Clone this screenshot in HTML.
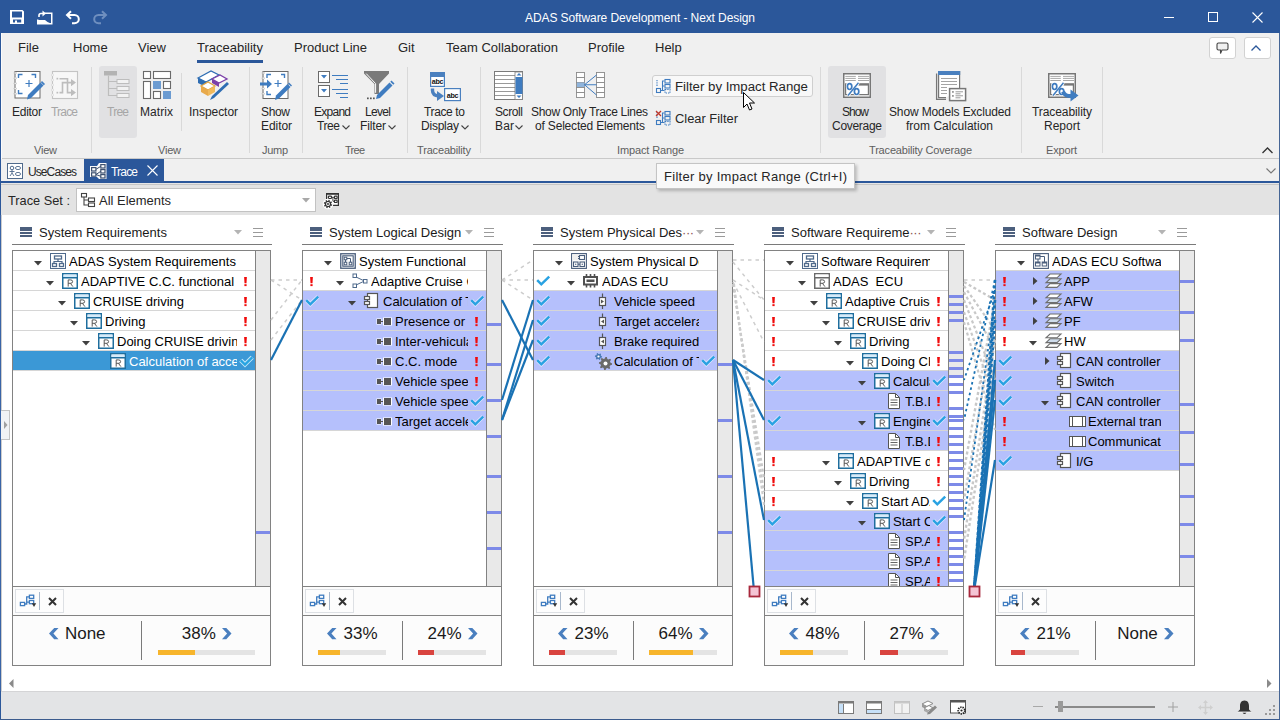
<!DOCTYPE html><html><head><meta charset="utf-8"><style>
*{box-sizing:border-box;margin:0;padding:0}
html,body{width:1280px;height:720px;overflow:hidden;background:#fff;font-family:"Liberation Sans",sans-serif;color:#262626}
.a{position:absolute}
.t{position:absolute;white-space:nowrap;line-height:1}
svg{position:absolute;overflow:visible}
</style></head><body><div class="a" style="left:0px;top:0px;width:1280px;height:720px;background:#fff"></div>
<div class="a" style="left:0px;top:0px;width:1280px;height:33px;background:#2b579a"></div>
<div class="a" style="left:0px;top:33px;width:1280px;height:126px;background:#f0f0f0"></div>
<div class="a" style="left:0px;top:159px;width:1280px;height:22px;background:#f0f0f0"></div>
<div class="a" style="left:0px;top:158px;width:1280px;height:1px;background:#c9c9c9"></div>
<div class="a" style="left:0px;top:181px;width:1280px;height:2px;background:#2b579a"></div>
<div class="a" style="left:0px;top:183px;width:1280px;height:1px;background:#e6e6e6"></div>
<div class="a" style="left:0px;top:184px;width:1280px;height:1px;background:#c6c6c6"></div>
<div class="a" style="left:0px;top:185px;width:1280px;height:30px;background:#e3e3e3"></div>
<div class="a" style="left:0px;top:691px;width:1280px;height:1px;background:#d4d4d6"></div>
<div class="a" style="left:0px;top:692px;width:1280px;height:28px;background:#e3e4e6"></div>
<div class="a" style="left:0px;top:0px;width:1px;height:720px;background:#2b579a"></div>
<div class="a" style="left:0px;top:215px;width:1px;height:476px;background:#3a64a6"></div>
<div class="a" style="left:1px;top:33px;width:1px;height:126px;background:#fbfbfb"></div>
<div class="a" style="left:1px;top:215px;width:1px;height:476px;background:#cdcdcd"></div>
<div class="a" style="left:1279px;top:33px;width:1px;height:687px;background:#456595"></div>
<div class="a" style="left:0px;top:719px;width:1280px;height:1px;background:#3b5b8e"></div>
<div class="t" style="left:525px;top:11.84px;font-size:12px;color:#ffffff;letter-spacing:-0.090px;">ADAS Software Development - Next Design</div>
<svg style="left:10px;top:10px" width="14" height="14" viewBox="0 0 14 14"><path d="M0 0H12.5L14 1.5V14H0Z M2 1.6V7.6H12V1.6Z M3 9.6V12.6H5V10.6H7V12.6H11.2V9.6Z" fill="#ffffff" fill-rule="evenodd"/></svg>
<svg style="left:37px;top:10px" width="16" height="15" viewBox="0 0 16 15"><path d="M0.75 9.5V13.75H14.75V3.25H7.5" fill="none" stroke="#ffffff" stroke-width="1.5"/><path d="M1 10H8L10.5 12L14 13.5H1Z" fill="#ffffff"/><path d="M2 7V5.5Q2 3.5 4 3.5H6" fill="none" stroke="#ffffff" stroke-width="1.6"/><path d="M5.5 0.5L9 3.5L5.5 6.5Z" fill="#ffffff"/></svg>
<svg style="left:65px;top:10px" width="15" height="14" viewBox="0 0 15 14"><path d="M2.5 5H9.5C12 5 13.8 7 13.8 9.2C13.8 11.4 12 13.2 9.5 13.2H7" fill="none" stroke="#ffffff" stroke-width="2"/><path d="M6 1.2L2 5L6 8.8" fill="none" stroke="#ffffff" stroke-width="2"/></svg>
<svg style="left:93px;top:10px" width="15" height="14" viewBox="0 0 15 14"><path d="M12.5 5H5.5C3 5 1.2 7 1.2 9.2C1.2 11.4 3 13.2 5.5 13.2H8" fill="none" stroke="#6f8fbf" stroke-width="2"/><path d="M9 1.2L13 5L9 8.8" fill="none" stroke="#6f8fbf" stroke-width="2"/></svg>
<div class="a" style="left:1164px;top:17px;width:10px;height:1px;background:#fff"></div>
<div class="a" style="left:1208px;top:12px;width:10px;height:10px;border:1px solid #fff"></div>
<svg style="left:1252px;top:12px" width="11" height="11" viewBox="0 0 11 11"><path d="M0.5 0.5L10.5 10.5M10.5 0.5L0.5 10.5" stroke="#fff" stroke-width="1.1"/></svg>
<div class="t" style="left:18px;top:41.00px;font-size:13px;color:#262626;">File</div>
<div class="t" style="left:73px;top:41.00px;font-size:13px;color:#262626;">Home</div>
<div class="t" style="left:138px;top:41.00px;font-size:13px;color:#262626;">View</div>
<div class="t" style="left:197px;top:41.00px;font-size:13px;color:#262626;">Traceability</div>
<div class="t" style="left:294px;top:41.00px;font-size:13px;color:#262626;">Product Line</div>
<div class="t" style="left:398px;top:41.00px;font-size:13px;color:#262626;">Git</div>
<div class="t" style="left:446px;top:41.00px;font-size:13px;color:#262626;">Team Collaboration</div>
<div class="t" style="left:588px;top:41.00px;font-size:13px;color:#262626;">Profile</div>
<div class="t" style="left:655px;top:41.00px;font-size:13px;color:#262626;">Help</div>
<div class="a" style="left:197px;top:60px;width:66px;height:2.5px;background:#2b579a"></div>
<div class="a" style="left:1209px;top:37px;width:27px;height:22px;border:1px solid #d2d2d2;border-radius:3px;background:#fff"></div>
<svg style="left:1216px;top:42px" width="13" height="13" viewBox="0 0 13 13"><path d="M2.5 1H10.5Q12 1 12 2.5V6.5Q12 8 10.5 8H6L4.5 11.5V8H2.5Q1 8 1 6.5V2.5Q1 1 2.5 1Z" fill="#f0f0f0" stroke="#444" stroke-width="1.1"/></svg>
<div class="a" style="left:1244px;top:37px;width:27px;height:22px;border:1px solid #d2d2d2;border-radius:3px;background:#fff"></div>
<svg style="left:1251px;top:45px" width="11" height="6" viewBox="0 0 11 6"><path d="M0.5 5.5L5 1L9.5 5.5" fill="none" stroke="#2b579a" stroke-width="1.3"/></svg>
<div class="t" style="left:34px;top:144.69px;font-size:11px;color:#5e5e5e;letter-spacing:-0.214px;">View</div>
<div class="t" style="left:158px;top:144.69px;font-size:11px;color:#5e5e5e;letter-spacing:-0.214px;">View</div>
<div class="t" style="left:262px;top:144.69px;font-size:11px;color:#5e5e5e;letter-spacing:-0.299px;">Jump</div>
<div class="t" style="left:345px;top:144.69px;font-size:11px;color:#5e5e5e;letter-spacing:-0.736px;">Tree</div>
<div class="t" style="left:417px;top:144.69px;font-size:11px;color:#5e5e5e;letter-spacing:-0.166px;">Traceability</div>
<div class="t" style="left:617px;top:144.69px;font-size:11px;color:#5e5e5e;letter-spacing:-0.134px;">Impact Range</div>
<div class="t" style="left:869px;top:144.69px;font-size:11px;color:#5e5e5e;letter-spacing:-0.179px;">Traceability Coverage</div>
<div class="t" style="left:1046px;top:144.69px;font-size:11px;color:#5e5e5e;letter-spacing:-0.158px;">Export</div>
<div class="a" style="left:91px;top:67px;width:1px;height:86px;background:#d9d9d9"></div>
<div class="a" style="left:249px;top:67px;width:1px;height:86px;background:#d9d9d9"></div>
<div class="a" style="left:302px;top:67px;width:1px;height:86px;background:#d9d9d9"></div>
<div class="a" style="left:407px;top:67px;width:1px;height:86px;background:#d9d9d9"></div>
<div class="a" style="left:480px;top:67px;width:1px;height:86px;background:#d9d9d9"></div>
<div class="a" style="left:820px;top:67px;width:1px;height:86px;background:#d9d9d9"></div>
<div class="a" style="left:1021px;top:67px;width:1px;height:86px;background:#d9d9d9"></div>
<div class="a" style="left:1102px;top:67px;width:1px;height:86px;background:#d9d9d9"></div>
<div class="a" style="left:181px;top:73px;width:1px;height:58px;background:#d9d9d9"></div>
<div class="a" style="left:99px;top:66px;width:38px;height:72px;background:#e1e1e3;border-radius:3px"></div>
<div class="a" style="left:828px;top:66px;width:58px;height:72px;background:#e1e1e3;border-radius:3px"></div>
<svg style="left:14px;top:71px" width="30" height="30" viewBox="0 0 30 30"><rect x="1" y="0.5" width="25" height="26.5" fill="#fff" stroke="#6a6a6a"/><circle cx="1.2" cy="2.0" r="1.1" fill="#fff" stroke="#9a9a9a" stroke-width="0.6"/><circle cx="1.2" cy="7.2" r="1.1" fill="#fff" stroke="#9a9a9a" stroke-width="0.6"/><circle cx="1.2" cy="12.4" r="1.1" fill="#fff" stroke="#9a9a9a" stroke-width="0.6"/><circle cx="1.2" cy="17.6" r="1.1" fill="#fff" stroke="#9a9a9a" stroke-width="0.6"/><circle cx="1.2" cy="22.8" r="1.1" fill="#fff" stroke="#9a9a9a" stroke-width="0.6"/><path d="M4.5 7V3.5H8.5M17.5 3.5H21.5V7M4.5 19V22.5H8.5" fill="none" stroke="#3f7cc0" stroke-width="1.4"/><path d="M15 9V16M11.5 12.5H18.5" stroke="#3f7cc0" stroke-width="1.2"/><path d="M13 28.5L14 24L26.5 11.5L29.5 14.5L17 27Z" fill="#3f7cc0"/><path d="M26.8 11.2L28 10L31 13L29.8 14.2" fill="#3f7cc0"/></svg>
<div class="t" style="left:12px;top:105.84px;font-size:12px;color:#262626;letter-spacing:-0.269px;">Editor</div>
<svg style="left:51px;top:71px" width="30" height="30" viewBox="0 0 30 30"><rect x="1.5" y="0.5" width="25" height="27" fill="#f7f7f7" stroke="#c4c4c4" stroke-width="1.1"/><circle cx="1.5" cy="4.0" r="1.1" fill="#fff" stroke="#cfcfcf" stroke-width="0.6"/><circle cx="1.5" cy="9.0" r="1.1" fill="#fff" stroke="#cfcfcf" stroke-width="0.6"/><circle cx="1.5" cy="14.0" r="1.1" fill="#fff" stroke="#cfcfcf" stroke-width="0.6"/><circle cx="1.5" cy="19.0" r="1.1" fill="#fff" stroke="#cfcfcf" stroke-width="0.6"/><circle cx="1.5" cy="24.0" r="1.1" fill="#fff" stroke="#cfcfcf" stroke-width="0.6"/><rect x="5.5" y="6.8" width="1.7" height="1.7" fill="#bdbdbd"/><rect x="5.5" y="20.8" width="1.7" height="1.7" fill="#bdbdbd"/><path d="M8.5 7.7H16.5V21.6H21M8.5 21.6H11.5V11.6H21" fill="none" stroke="#bdbdbd" stroke-width="1.6"/><path d="M20 8L25 11.6L20 15.2Z M20 18L25 21.6L20 25.2Z" fill="#bdbdbd"/></svg>
<div class="t" style="left:51px;top:105.84px;font-size:12px;color:#a6a6a6;letter-spacing:-0.807px;">Trace</div>
<svg style="left:104px;top:71px" width="28" height="28" viewBox="0 0 28 28"><rect x="0" y="0" width="13" height="4.5" fill="#b3b3b3"/><path d="M4.5 4.5V24.5H13M4.5 10.5H13M4.5 17.5H13" fill="none" stroke="#bdbdbd" stroke-width="1.2"/><rect x="13" y="8.5" width="12" height="4" fill="#f2f2f2" stroke="#bdbdbd"/><rect x="13" y="15.5" width="12" height="4" fill="#f2f2f2" stroke="#bdbdbd"/><rect x="13" y="22.5" width="12" height="4" fill="#f2f2f2" stroke="#bdbdbd"/></svg>
<div class="t" style="left:107px;top:105.84px;font-size:12px;color:#a6a6a6;letter-spacing:-0.742px;">Tree</div>
<svg style="left:143px;top:71px" width="29" height="29" viewBox="0 0 29 29"><g fill="#fff" stroke="#6a6a6a" stroke-width="1.1"><rect x="0.5" y="0.5" width="7" height="7"/><rect x="10.5" y="0.5" width="17" height="7"/><rect x="0.5" y="10.5" width="7" height="17"/><rect x="20.5" y="10.5" width="7" height="7"/><rect x="10.5" y="20.5" width="7" height="7"/></g><rect x="10" y="10" width="8" height="8" fill="#6b9bd1"/><rect x="20" y="20" width="8" height="8" fill="#6b9bd1"/></svg>
<div class="t" style="left:140px;top:105.84px;font-size:12px;color:#262626;letter-spacing:0.067px;">Matrix</div>
<svg style="left:197px;top:70px" width="34" height="33" viewBox="0 0 34 33"><path d="M1 8L14 1L22 5L9 12Z" fill="#fff" stroke="#2e6db3" stroke-width="1.3"/><path d="M1 8V13L9 17V12Z" fill="#2e6db3"/><path d="M15 9L23 5L30 9L22 13Z" fill="#fff" stroke="#7b3fa8" stroke-width="1.3"/><path d="M15 9V13L22 17V13Z" fill="#7b3fa8"/><path d="M4 16L11 12L18 16L11 20Z" fill="#fff" stroke="#e0a341" stroke-width="1.2"/><path d="M4 16V22L11 26V20Z" fill="#e8a94a"/><path d="M11 20V26L18 22V16Z" fill="#f0b95b"/><path d="M13 30L15 26L30 12L32 14L17 28Z" fill="#2e6db3"/></svg>
<div class="t" style="left:189px;top:105.84px;font-size:12px;color:#262626;letter-spacing:-0.044px;">Inspector</div>
<svg style="left:259px;top:71px" width="34" height="30" viewBox="0 0 34 30"><rect x="4" y="0.5" width="25" height="27" fill="#fff" stroke="#6a6a6a"/><circle cx="4.2" cy="2.0" r="1.1" fill="#fff" stroke="#9a9a9a" stroke-width="0.6"/><circle cx="4.2" cy="7.2" r="1.1" fill="#fff" stroke="#9a9a9a" stroke-width="0.6"/><circle cx="4.2" cy="12.4" r="1.1" fill="#fff" stroke="#9a9a9a" stroke-width="0.6"/><circle cx="4.2" cy="17.6" r="1.1" fill="#fff" stroke="#9a9a9a" stroke-width="0.6"/><circle cx="4.2" cy="22.8" r="1.1" fill="#fff" stroke="#9a9a9a" stroke-width="0.6"/><path d="M8 7V3.5H12M22 3.5H25.5V7M8 20V23.5H12" fill="none" stroke="#3f7cc0" stroke-width="1.4"/><path d="M19 9V16M15.5 12.5H22.5" stroke="#3f7cc0" stroke-width="1.2"/><path d="M1 11.5H8V8.5L13 13L8 17.5V14.5H1Z" fill="#3f7cc0"/><path d="M16 29L17 24.5L28.5 13L31.5 16L20 27.5Z" fill="#3f7cc0"/><path d="M29 12.5L30 11.5L33 14.5L32 15.5" fill="#3f7cc0"/></svg>
<div class="t" style="left:261px;top:105.84px;font-size:12px;color:#262626;letter-spacing:-0.339px;">Show</div>
<div class="t" style="left:261px;top:119.84px;font-size:12px;color:#262626;letter-spacing:-0.069px;">Editor</div>
<svg style="left:318px;top:71px" width="31" height="27" viewBox="0 0 31 27"><rect x="0.5" y="0.5" width="11" height="11" fill="#fff" stroke="#6a6a6a"/><rect x="0.5" y="14.5" width="11" height="11" fill="#fff" stroke="#6a6a6a"/><path d="M3 4H9L6 7.5Z M3 18H9L6 21.5Z" fill="#3f7cc0"/><path d="M14 4.5H30M18 8.5H30M22 12.5H30M14 18.5H30M18 22.5H30M22 26.5H30" stroke="#3f7cc0" stroke-width="1.1"/></svg>
<div class="t" style="left:314px;top:105.84px;font-size:12px;color:#262626;letter-spacing:-0.739px;">Expand</div>
<div class="t" style="left:317px;top:119.84px;font-size:12px;color:#262626;letter-spacing:-0.409px;">Tree</div>
<svg style="left:342px;top:125px" width="8" height="5" viewBox="0 0 8 5"><path d="M0.5 0.5L4 4L7.5 0.5" fill="none" stroke="#444" stroke-width="1.1"/></svg>
<svg style="left:363px;top:71px" width="33" height="30" viewBox="0 0 33 30"><path d="M1 0H26V2.5L16 13V23H11.5V13L1 2.5Z" fill="#7a7a7a"/><path d="M3.2 2.6L12.6 12.6V21.8" fill="none" stroke="#fff" stroke-width="1"/><rect x="4" y="26.5" width="1.7" height="1.7" fill="#555"/><rect x="7" y="26.5" width="1.7" height="1.7" fill="#555"/><rect x="10" y="26.5" width="1.7" height="1.7" fill="#555"/><path d="M13 28L14 24L26.5 11.5L29.5 14.5L17 27Z" fill="#3f7cc0"/><path d="M27.3 10.7L28.5 9.5L31.5 12.5L30.3 13.7Z" fill="#3f7cc0"/></svg>
<div class="t" style="left:365px;top:105.84px;font-size:12px;color:#262626;letter-spacing:-0.671px;">Level</div>
<div class="t" style="left:360px;top:119.84px;font-size:12px;color:#262626;letter-spacing:-0.133px;">Filter</div>
<svg style="left:388px;top:125px" width="8" height="5" viewBox="0 0 8 5"><path d="M0.5 0.5L4 4L7.5 0.5" fill="none" stroke="#444" stroke-width="1.1"/></svg>
<svg style="left:429px;top:71px" width="33" height="31" viewBox="0 0 33 31"><rect x="1.6" y="1.6" width="13.8" height="13.8" fill="#fff" stroke="#4a80bf" stroke-width="1.2"/><rect x="1" y="1" width="15" height="5" fill="#4a80bf"/><text x="8.5" y="13.3" font-size="7.2" font-weight="bold" text-anchor="middle" font-family="Liberation Sans" fill="#111" letter-spacing="-0.3">abc</text><rect x="15.6" y="17.6" width="15.8" height="12" fill="#fff" stroke="#4a80bf" stroke-width="1.2"/><text x="23.5" y="26.5" font-size="7.2" font-weight="bold" text-anchor="middle" font-family="Liberation Sans" fill="#111" letter-spacing="-0.3">abc</text><path d="M3.5 17.5V19.5Q3.5 24.5 10 25" fill="none" stroke="#4a80bf" stroke-width="3.4"/><path d="M8 20L15 25L8 30Z" fill="#4a80bf"/></svg>
<div class="t" style="left:424px;top:105.84px;font-size:12px;color:#262626;letter-spacing:-0.367px;">Trace to</div>
<div class="t" style="left:421px;top:119.84px;font-size:12px;color:#262626;letter-spacing:-0.224px;">Display</div>
<svg style="left:461px;top:125px" width="8" height="5" viewBox="0 0 8 5"><path d="M0.5 0.5L4 4L7.5 0.5" fill="none" stroke="#444" stroke-width="1.1"/></svg>
<svg style="left:494px;top:71px" width="30" height="30" viewBox="0 0 30 30"><rect x="0.5" y="0.5" width="28" height="28" fill="#fff" stroke="#7a7a7a"/><path d="M1 4.5H21" stroke="#999" stroke-width="1"/><path d="M1 8.5H21" stroke="#999" stroke-width="1"/><path d="M1 12.5H21" stroke="#999" stroke-width="1"/><path d="M1 16.5H21" stroke="#999" stroke-width="1"/><path d="M1 20.5H21" stroke="#999" stroke-width="1"/><path d="M1 24.5H21" stroke="#999" stroke-width="1"/><rect x="21" y="1" width="7.5" height="27.5" fill="#fff" stroke="#7a7a7a" stroke-width="0.8"/><rect x="21.5" y="6" width="7" height="17" fill="#3f7cc0"/><path d="M22.5 4.5H27.5L25 2Z M22.5 24.5H27.5L25 27Z" fill="#3f7cc0"/></svg>
<div class="t" style="left:495px;top:105.84px;font-size:12px;color:#262626;letter-spacing:-0.401px;">Scroll</div>
<div class="t" style="left:495px;top:119.84px;font-size:12px;color:#262626;letter-spacing:0.163px;">Bar</div>
<svg style="left:515px;top:125px" width="8" height="5" viewBox="0 0 8 5"><path d="M0.5 0.5L4 4L7.5 0.5" fill="none" stroke="#444" stroke-width="1.1"/></svg>
<svg style="left:576px;top:72px" width="29" height="28" viewBox="0 0 29 28"><g fill="#fff" stroke="#8a8a8a" stroke-width="0.9"><rect x="0.5" y="0.5" width="8" height="5"/><rect x="20.5" y="0.5" width="8" height="5"/><rect x="0.5" y="5.5" width="8" height="5"/><rect x="20.5" y="5.5" width="8" height="5"/><rect x="0.5" y="10.5" width="8" height="5"/><rect x="20.5" y="10.5" width="8" height="5"/><rect x="0.5" y="15.5" width="8" height="5"/><rect x="20.5" y="15.5" width="8" height="5"/><rect x="0.5" y="20.5" width="8" height="5"/><rect x="20.5" y="20.5" width="8" height="5"/></g><rect x="1" y="10.5" width="7.5" height="4.5" fill="#8fb4dc"/><path d="M8.5 12.75L20.5 3M8.5 12.75H20.5M8.5 12.75L20.5 23" stroke="#3f7cc0" stroke-width="1"/></svg>
<div class="t" style="left:531px;top:105.84px;font-size:12px;color:#262626;letter-spacing:-0.319px;">Show Only Trace Lines</div>
<div class="t" style="left:535px;top:119.84px;font-size:12px;color:#262626;letter-spacing:-0.178px;">of Selected Elements</div>
<div class="a" style="left:652px;top:75px;width:161px;height:22px;border:1px solid #cfcfcf;border-radius:3px;background:#f8f8f8"></div>
<svg style="left:656px;top:79px" width="15" height="14" viewBox="0 0 15 14"><g fill="none" stroke="#3f7cc0" stroke-width="1.1"><rect x="0.5" y="9.5" width="4" height="4"/><path d="M4.5 11.5H6.5V2H8.5M6.5 7H8.5M6.5 11.5H8.5"/><rect x="9" y="0.5" width="5" height="3.5"/><rect x="9" y="5.5" width="5" height="3.5"/><rect x="9" y="10.5" width="5" height="3.5" stroke-dasharray="1.3 1"/></g><path d="M1 1V8" stroke="#3f7cc0" stroke-width="1.1" stroke-dasharray="1.3 1"/></svg>
<div class="t" style="left:675px;top:79.81px;font-size:13.22px;color:#262626;">Filter by Impact Range</div>
<svg style="left:656px;top:111px" width="15" height="14" viewBox="0 0 15 14"><g fill="none" stroke="#3f7cc0" stroke-width="1.1"><rect x="0.5" y="9.5" width="4" height="4"/><path d="M4.5 11.5H6.5V2H8.5M6.5 7H8.5M6.5 11.5H8.5"/><rect x="9" y="0.5" width="5" height="3.5"/><rect x="9" y="5.5" width="5" height="3.5"/><rect x="9" y="10.5" width="5" height="3.5" stroke-dasharray="1.3 1"/></g><path d="M1 1V8" stroke="#3f7cc0" stroke-width="1.1" stroke-dasharray="1.3 1"/><path d="M0 0L5 5M5 0L0 5" stroke="#c0392b" stroke-width="1.3"/></svg>
<div class="t" style="left:675px;top:113.09px;font-size:12.89px;color:#262626;">Clear Filter</div>
<svg style="left:843px;top:73px" width="30" height="30" viewBox="0 0 30 30"><rect x="0.75" y="0.75" width="26.5" height="23.5" fill="#fff" stroke="#777" stroke-width="1.5"/><path d="M2.3 3.4H12.8M2.3 5.4H12.8M2.3 7.5H12.8M15 3.4H26M15 5.4H26M15 7.5H26" stroke="#a8a8a8" stroke-width="1"/><path d="M3.5 10.8H2.6V21.6H25.4V10.8" fill="none" stroke="#777" stroke-width="1.2"/><rect x="15.5" y="10.2" width="10.4" height="2.4" fill="#777"/><ellipse cx="6.6" cy="13.6" rx="2.2" ry="2.9" fill="none" stroke="#fff" stroke-width="3"/><ellipse cx="13.6" cy="18.6" rx="2.2" ry="2.9" fill="none" stroke="#fff" stroke-width="3"/><path d="M5 22.5L15.5 9.8" stroke="#fff" stroke-width="3"/><ellipse cx="6.6" cy="13.6" rx="2.2" ry="2.9" fill="none" stroke="#3f7cc0" stroke-width="1.7"/><ellipse cx="13.6" cy="18.6" rx="2.2" ry="2.9" fill="none" stroke="#3f7cc0" stroke-width="1.7"/><path d="M5 22.5L15.5 9.8" stroke="#3f7cc0" stroke-width="1.5"/></svg>
<div class="t" style="left:842px;top:105.84px;font-size:12px;color:#262626;letter-spacing:-1.006px;">Show</div>
<div class="t" style="left:832px;top:119.84px;font-size:12px;color:#262626;letter-spacing:-0.290px;">Coverage</div>
<svg style="left:934px;top:70px" width="34" height="33" viewBox="0 0 34 33"><path d="M2.6 3.5V29.4H12" fill="none" stroke="#777" stroke-width="1.3"/><path d="M12 27.6H4.6V1.5H25.6V19" fill="#fff" stroke="#777" stroke-width="1.2"/><rect x="4" y="1" width="22.2" height="4" fill="#4a80bf"/><path d="M7 8.5H23M7 11.5H23M7 14.5H23M7 17.5H13M7 20.5H13M7 23.5H13" stroke="#9a9a9a" stroke-width="0.9"/><rect x="15.6" y="18.6" width="16" height="12" fill="#fff" stroke="#777" stroke-width="1.5"/><rect x="18" y="21" width="1.8" height="1.8" fill="#999"/><rect x="18" y="25" width="1.8" height="1.8" fill="#999"/><path d="M21.5 21.8H29M21.5 23.8H26.5M21.5 25.8H29M21.5 27.8H26.5" stroke="#9a9a9a" stroke-width="1"/></svg>
<div class="t" style="left:889px;top:105.84px;font-size:12px;color:#262626;letter-spacing:-0.144px;">Show Models Excluded</div>
<div class="t" style="left:906px;top:119.84px;font-size:12px;color:#262626;letter-spacing:0.020px;">from Calculation</div>
<svg style="left:1048px;top:73px" width="30" height="30" viewBox="0 0 30 30"><rect x="0.75" y="0.75" width="26.5" height="23.5" fill="#fff" stroke="#777" stroke-width="1.5"/><path d="M2.3 3.4H12.8M2.3 5.4H12.8M2.3 7.5H12.8M15 3.4H26M15 5.4H26M15 7.5H26" stroke="#a8a8a8" stroke-width="1"/><path d="M3.5 10.8H2.6V21.6H25.4V10.8" fill="none" stroke="#777" stroke-width="1.2"/><rect x="15.5" y="10.2" width="10.4" height="2.4" fill="#777"/><ellipse cx="6.6" cy="13.6" rx="2.2" ry="2.9" fill="none" stroke="#fff" stroke-width="3"/><ellipse cx="13.6" cy="18.6" rx="2.2" ry="2.9" fill="none" stroke="#fff" stroke-width="3"/><path d="M5 22.5L15.5 9.8" stroke="#fff" stroke-width="3"/><ellipse cx="6.6" cy="13.6" rx="2.2" ry="2.9" fill="none" stroke="#3f7cc0" stroke-width="1.7"/><ellipse cx="13.6" cy="18.6" rx="2.2" ry="2.9" fill="none" stroke="#3f7cc0" stroke-width="1.7"/><path d="M5 22.5L15.5 9.8" stroke="#3f7cc0" stroke-width="1.5"/><path d="M15 18.5Q17 23.5 23.5 23.2" fill="none" stroke="#3f7cc0" stroke-width="3.8"/><path d="M22.5 16.5L30.5 22.5L22.5 28.5Z" fill="#3f7cc0"/></svg>
<div class="t" style="left:1032px;top:105.84px;font-size:12px;color:#262626;letter-spacing:-0.082px;">Traceability</div>
<div class="t" style="left:1044px;top:119.84px;font-size:12px;color:#262626;letter-spacing:-0.003px;">Report</div>
<svg style="left:1262px;top:147px" width="11" height="7" viewBox="0 0 11 7"><path d="M0.5 6L5.5 1L10.5 6" fill="none" stroke="#333" stroke-width="1.3"/></svg>
<svg style="left:7px;top:163px" width="17" height="16" viewBox="0 0 17 16"><rect x="0.5" y="0.5" width="15" height="15" fill="#fff" stroke="#4f6a8c"/><circle cx="5" cy="5" r="1.8" fill="none" stroke="#4f6a8c"/><path d="M5 7V10M2.5 8.5H7.5M5 10L3 13M5 10L7 13" stroke="#4f6a8c" stroke-width="0.9"/><ellipse cx="11" cy="5" rx="2.6" ry="1.6" fill="none" stroke="#4f6a8c" stroke-width="0.9"/><ellipse cx="11" cy="11" rx="2.6" ry="1.6" fill="none" stroke="#4f6a8c" stroke-width="0.9"/></svg>
<div class="t" style="left:28px;top:165.84px;font-size:12px;color:#262626;letter-spacing:-0.907px;">UseCases</div>
<div class="a" style="left:84px;top:159px;width:80px;height:22px;background:#2b579a"></div>
<svg style="left:89px;top:162px" width="18" height="18" viewBox="0 0 18 18"><path d="M1 4H8L10 1H17.5V17H10L8 15H1Z" fill="#fafafa"/><g fill="#fff" stroke="#3d5170" stroke-width="1.2"><rect x="2.6" y="5.6" width="4.3" height="3.4"/><rect x="2.6" y="10.8" width="4.3" height="3.4"/><rect x="11.8" y="2.6" width="4.2" height="3.4"/><rect x="11.8" y="7.6" width="4.2" height="3.4"/><rect x="11.8" y="12.6" width="4.2" height="3.4"/></g><path d="M7 7.3L11.8 4.3M7 12.5L11.8 9.3M7 12.5L11.8 14.3" stroke="#3d5170" stroke-width="1"/></svg>
<div class="t" style="left:111px;top:165.84px;font-size:12px;color:#ffffff;letter-spacing:-0.807px;">Trace</div>
<svg style="left:147px;top:165px" width="11" height="11" viewBox="0 0 11 11"><path d="M0.5 0.5L10.5 10.5M10.5 0.5L0.5 10.5" stroke="#fff" stroke-width="1.1"/></svg>
<svg style="left:1266px;top:168px" width="10" height="6" viewBox="0 0 10 6"><path d="M0.5 0.5L5 5L9.5 0.5" fill="none" stroke="#777" stroke-width="1.1"/></svg>
<div class="t" style="left:8px;top:195.19px;font-size:12.77px;color:#262626;">Trace Set :</div>
<div class="a" style="left:76px;top:188px;width:240px;height:24px;border:1.5px solid #c2c2c2;background:#fff"></div>
<svg style="left:81px;top:193px" width="14" height="14" viewBox="0 0 14 14"><g fill="none" stroke="#444" stroke-width="1.1"><rect x="0.5" y="0.5" width="5" height="3.5"/><rect x="7.5" y="5" width="6" height="3.5"/><rect x="7.5" y="10" width="6" height="3.5"/><path d="M3 4V12H7.5M3 7H7.5"/></g></svg>
<div class="t" style="left:99px;top:195.03px;font-size:12.96px;color:#262626;">All Elements</div>
<svg style="left:302px;top:198px" width="8" height="5" viewBox="0 0 8 5"><path d="M0 0H8L4 4.5Z" fill="#a8a8a8"/></svg>
<svg style="left:320px;top:188px" width="26" height="24" viewBox="0 0 26 24"><rect x="6" y="5" width="13" height="13" fill="#fff"/><g fill="none" stroke="#333" stroke-width="1.2"><path d="M6.6 11V5.6H18.4V17.4H12"/><rect x="8.4" y="8.1" width="3.1" height="2.4" rx="0.8"/><rect x="14.5" y="8.1" width="2.6" height="2.4" rx="0.6"/><rect x="14.5" y="12.1" width="2.6" height="2.4" rx="0.6"/><path d="M11.5 9.3H14.5M12.9 9.3V13.3H14.5" stroke-width="0.9"/></g><rect x="6" y="5" width="13" height="1.7" fill="#333"/><circle cx="8" cy="16" r="5.3" fill="#fff"/><path d="M12.22,16.84L11.97,17.65L10.58,17.72L10.19,18.19L10.39,19.58L9.65,19.97L8.60,19.04L8.00,19.10L7.16,20.22L6.35,19.97L6.28,18.58L5.81,18.19L4.42,18.39L4.03,17.65L4.96,16.60L4.90,16.00L3.78,15.16L4.03,14.35L5.42,14.28L5.81,13.81L5.61,12.42L6.35,12.03L7.40,12.96L8.00,12.90L8.84,11.78L9.65,12.03L9.72,13.42L10.19,13.81L11.58,13.61L11.97,14.35L11.04,15.40L11.10,16.00Z" fill="#333"/><circle cx="8" cy="16" r="1.9" fill="#fff"/><circle cx="8" cy="16" r="0.9" fill="#222"/></svg>
<div class="a" style="left:656px;top:163px;width:199px;height:26px;border:1px solid #c4c4c4;background:#f9f9f9;box-shadow:2px 2px 3px rgba(0,0,0,0.22)"></div>
<div class="t" style="left:664px;top:170.00px;font-size:13px;color:#262626;letter-spacing:0.285px;">Filter by Impact Range (Ctrl+I)</div>
<svg style="left:743px;top:92px" width="14" height="20" viewBox="0 0 14 20"><path d="M0.5 0.5V15.5L4 12L6.5 18L9 17L6.5 11H11.5Z" fill="#fff" stroke="#000" stroke-width="1"/></svg>
<svg style="left:9px;top:679px" width="5" height="9" viewBox="0 0 5 9"><path d="M4.5 0V9L0 4.5Z" fill="#8a8a8a"/></svg>
<svg style="left:1267px;top:679px" width="5" height="9" viewBox="0 0 5 9"><path d="M0 0V9L4.5 4.5Z" fill="#8a8a8a"/></svg>
<svg style="left:20px;top:227px" width="12" height="10" viewBox="0 0 12 10"><rect x="0" y="0" width="12" height="4" fill="#4c5f7d"/><rect x="0" y="5" width="12" height="2" fill="#4c5f7d"/><rect x="0" y="8" width="12" height="2" fill="#4c5f7d"/></svg>
<div class="t" style="left:39px;top:226.00px;font-size:13px;color:#1a1a1a;">System Requirements</div>
<svg style="left:234px;top:230px" width="8" height="5" viewBox="0 0 8 5"><path d="M0 0H8L4 4.5Z" fill="#b4b4b4"/></svg>
<svg style="left:253px;top:228px" width="10" height="10" viewBox="0 0 10 10"><path d="M0 0.5H10M0 4.5H10M0 8.5H10" stroke="#9a9a9a" stroke-width="1"/></svg>
<div class="a" style="left:12px;top:244px;width:260px;height:1px;background:#7a7a7a"></div>
<div class="a" style="left:12px;top:250px;width:259px;height:337px;border:1px solid #828282;background:#fff"></div>
<div class="a" style="left:255px;top:251px;width:15px;height:335px;border-left:1px solid #828282;background:#e9e9e9"></div>
<div class="a" style="left:256px;top:531px;width:14px;height:3px;background:#7d8ae8"></div>
<div class="a" style="left:13px;top:251px;width:242px;height:20px;overflow:hidden">
<div class="a" style="left:0;top:0;width:242px;height:19px;background:#fff"></div>
<div class="a" style="left:0;top:19px;width:242px;height:1px;background:#d6d6d6"></div>
</div>
<div class="a" style="left:0;top:0;width:1280px;height:271px;overflow:hidden;pointer-events:none">
<svg style="left:34px;top:261px" width="8" height="5" viewBox="0 0 8 5"><path d="M0 0H8L4 4.5Z" fill="#404040"/></svg>
<svg style="left:50px;top:253px" width="16" height="16" viewBox="0 0 16 16"><rect x="0.5" y="0.5" width="15" height="15" fill="#fff" stroke="#4f6a8c"/><rect x="4.5" y="3" width="7" height="3" fill="#fff" stroke="#4f6a8c" stroke-width="1.3"/><path d="M8 6V8M4 11V8.5H12V11" fill="none" stroke="#4f6a8c" stroke-width="1.2"/><rect x="2.5" y="10.5" width="4" height="3" fill="#fff" stroke="#4f6a8c" stroke-width="1.3"/><rect x="9.5" y="10.5" width="4" height="3" fill="#fff" stroke="#4f6a8c" stroke-width="1.3"/></svg>
<div class="t" style="left:69px;top:255.0px;height:17px;width:168px;overflow:hidden;font-size:13px;color:#000">ADAS System Requirements</div>
</div>
<div class="a" style="left:13px;top:271px;width:242px;height:20px;overflow:hidden">
<div class="a" style="left:0;top:0;width:242px;height:19px;background:#fff"></div>
<div class="a" style="left:0;top:19px;width:242px;height:1px;background:#d6d6d6"></div>
</div>
<div class="a" style="left:0;top:0;width:1280px;height:291px;overflow:hidden;pointer-events:none">
<svg style="left:46px;top:281px" width="8" height="5" viewBox="0 0 8 5"><path d="M0 0H8L4 4.5Z" fill="#404040"/></svg>
<svg style="left:62px;top:273px" width="16" height="16" viewBox="0 0 16 16"><rect x="0.75" y="0.75" width="14.5" height="14.5" fill="#fff" stroke="#1f6e9e" stroke-width="1.5"/><rect x="1.5" y="1.5" width="13" height="2.5" fill="#d6ebfa"/><path d="M1 4.75H15" stroke="#1f6e9e" stroke-width="1.5"/><path d="M6.2 13.6V6.9H8.6Q10.6 6.9 10.6 8.6Q10.6 10.3 8.6 10.3H6.2M8.4 10.3L10.9 13.6" fill="none" stroke="#505050" stroke-width="0.95"/></svg>
<div class="t" style="left:81px;top:275.0px;height:17px;width:156px;overflow:hidden;font-size:13px;color:#000">ADAPTIVE C.C. functional requirements</div>
<svg style="left:243.7px;top:277px" width="3" height="10" viewBox="0 0 3 10"><path d="M0.1 0H2.9L2.5 6.2H0.5Z" fill="#f00a0a"/><rect x="0.4" y="7.2" width="2.2" height="1.9" fill="#f00a0a"/></svg>
</div>
<div class="a" style="left:13px;top:291px;width:242px;height:20px;overflow:hidden">
<div class="a" style="left:0;top:0;width:242px;height:19px;background:#fff"></div>
<div class="a" style="left:0;top:19px;width:242px;height:1px;background:#d6d6d6"></div>
</div>
<div class="a" style="left:0;top:0;width:1280px;height:311px;overflow:hidden;pointer-events:none">
<svg style="left:58px;top:301px" width="8" height="5" viewBox="0 0 8 5"><path d="M0 0H8L4 4.5Z" fill="#404040"/></svg>
<svg style="left:74px;top:293px" width="16" height="16" viewBox="0 0 16 16"><rect x="0.75" y="0.75" width="14.5" height="14.5" fill="#fff" stroke="#1f6e9e" stroke-width="1.5"/><rect x="1.5" y="1.5" width="13" height="2.5" fill="#d6ebfa"/><path d="M1 4.75H15" stroke="#1f6e9e" stroke-width="1.5"/><path d="M6.2 13.6V6.9H8.6Q10.6 6.9 10.6 8.6Q10.6 10.3 8.6 10.3H6.2M8.4 10.3L10.9 13.6" fill="none" stroke="#505050" stroke-width="0.95"/></svg>
<div class="t" style="left:93px;top:295.0px;height:17px;width:144px;overflow:hidden;font-size:13px;color:#000">CRUISE driving</div>
<svg style="left:243.7px;top:297px" width="3" height="10" viewBox="0 0 3 10"><path d="M0.1 0H2.9L2.5 6.2H0.5Z" fill="#f00a0a"/><rect x="0.4" y="7.2" width="2.2" height="1.9" fill="#f00a0a"/></svg>
</div>
<div class="a" style="left:13px;top:311px;width:242px;height:20px;overflow:hidden">
<div class="a" style="left:0;top:0;width:242px;height:19px;background:#fff"></div>
<div class="a" style="left:0;top:19px;width:242px;height:1px;background:#d6d6d6"></div>
</div>
<div class="a" style="left:0;top:0;width:1280px;height:331px;overflow:hidden;pointer-events:none">
<svg style="left:70px;top:321px" width="8" height="5" viewBox="0 0 8 5"><path d="M0 0H8L4 4.5Z" fill="#404040"/></svg>
<svg style="left:86px;top:313px" width="16" height="16" viewBox="0 0 16 16"><rect x="0.75" y="0.75" width="14.5" height="14.5" fill="#fff" stroke="#1f6e9e" stroke-width="1.5"/><rect x="1.5" y="1.5" width="13" height="2.5" fill="#d6ebfa"/><path d="M1 4.75H15" stroke="#1f6e9e" stroke-width="1.5"/><path d="M6.2 13.6V6.9H8.6Q10.6 6.9 10.6 8.6Q10.6 10.3 8.6 10.3H6.2M8.4 10.3L10.9 13.6" fill="none" stroke="#505050" stroke-width="0.95"/></svg>
<div class="t" style="left:105px;top:315.0px;height:17px;width:132px;overflow:hidden;font-size:13px;color:#000">Driving</div>
<svg style="left:243.7px;top:317px" width="3" height="10" viewBox="0 0 3 10"><path d="M0.1 0H2.9L2.5 6.2H0.5Z" fill="#f00a0a"/><rect x="0.4" y="7.2" width="2.2" height="1.9" fill="#f00a0a"/></svg>
</div>
<div class="a" style="left:13px;top:331px;width:242px;height:20px;overflow:hidden">
<div class="a" style="left:0;top:0;width:242px;height:19px;background:#fff"></div>
<div class="a" style="left:0;top:19px;width:242px;height:1px;background:#d6d6d6"></div>
</div>
<div class="a" style="left:0;top:0;width:1280px;height:351px;overflow:hidden;pointer-events:none">
<svg style="left:82px;top:341px" width="8" height="5" viewBox="0 0 8 5"><path d="M0 0H8L4 4.5Z" fill="#404040"/></svg>
<svg style="left:98px;top:333px" width="16" height="16" viewBox="0 0 16 16"><rect x="0.75" y="0.75" width="14.5" height="14.5" fill="#fff" stroke="#1f6e9e" stroke-width="1.5"/><rect x="1.5" y="1.5" width="13" height="2.5" fill="#d6ebfa"/><path d="M1 4.75H15" stroke="#1f6e9e" stroke-width="1.5"/><path d="M6.2 13.6V6.9H8.6Q10.6 6.9 10.6 8.6Q10.6 10.3 8.6 10.3H6.2M8.4 10.3L10.9 13.6" fill="none" stroke="#505050" stroke-width="0.95"/></svg>
<div class="t" style="left:117px;top:335.0px;height:17px;width:120px;overflow:hidden;font-size:13px;color:#000">Doing CRUISE driving</div>
<svg style="left:243.7px;top:337px" width="3" height="10" viewBox="0 0 3 10"><path d="M0.1 0H2.9L2.5 6.2H0.5Z" fill="#f00a0a"/><rect x="0.4" y="7.2" width="2.2" height="1.9" fill="#f00a0a"/></svg>
</div>
<div class="a" style="left:13px;top:351px;width:242px;height:20px;overflow:hidden">
<div class="a" style="left:0;top:0;width:242px;height:19px;background:#3b98d6"></div>
<div class="a" style="left:0;top:19px;width:242px;height:1px;background:#d6d6d6"></div>
</div>
<div class="a" style="left:0;top:0;width:1280px;height:371px;overflow:hidden;pointer-events:none">
<svg style="left:110px;top:353px" width="16" height="16" viewBox="0 0 16 16"><rect x="0.75" y="0.75" width="14.5" height="14.5" fill="#fff" stroke="#1f6e9e" stroke-width="1.5"/><rect x="1.5" y="1.5" width="13" height="2.5" fill="#d6ebfa"/><path d="M1 4.75H15" stroke="#1f6e9e" stroke-width="1.5"/><path d="M6.2 13.6V6.9H8.6Q10.6 6.9 10.6 8.6Q10.6 10.3 8.6 10.3H6.2M8.4 10.3L10.9 13.6" fill="none" stroke="#505050" stroke-width="0.95"/></svg>
<div class="t" style="left:129px;top:355.0px;height:17px;width:108px;overflow:hidden;font-size:13px;color:#fff">Calculation of acceleration</div>
<svg style="left:239px;top:355px" width="15" height="12" viewBox="0 0 15 12"><path d="M1.8 5.3L6 9.5L13.2 2.3" fill="none" stroke="#c4e6f8" stroke-width="4.4" stroke-linejoin="miter"/><path d="M1.8 5.3L6 9.5L13.2 2.3" fill="none" stroke="#27a4e2" stroke-width="2.4"/></svg>
</div>
<div class="a" style="left:12px;top:586px;width:259px;height:80px;border:1px solid #828282;background:#fcfcfc"></div>
<div class="a" style="left:12px;top:615px;width:259px;height:1px;background:#828282"></div>
<div class="a" style="left:15px;top:589px;width:49px;height:24px;border:1.5px solid #dde0e4;background:#fdfdfd"></div>
<svg style="left:17px;top:593px" width="20" height="16" viewBox="0 0 20 16"><g fill="#fff" stroke="#3f7cc0" stroke-width="1.3"><rect x="3.4" y="9.4" width="4.2" height="3.2"/><rect x="12.4" y="2.2" width="4.3" height="3.2"/><rect x="12.4" y="7.5" width="4.3" height="3.2"/></g><path d="M7.6 11H9.7V3.8H12.4M9.7 9.1H12.4" fill="none" stroke="#3f7cc0" stroke-width="1.3"/><path d="M14.8 10.2H19.2L17 14Z" fill="#333"/></svg>
<div class="a" style="left:39px;top:592px;width:1px;height:18px;background:#a8b8cc"></div>
<svg style="left:48px;top:597px" width="9" height="9" viewBox="0 0 9 9"><path d="M1 1L8 8M8 1L1 8" stroke="#333" stroke-width="2"/></svg>
<div class="a" style="left:141px;top:621px;width:1px;height:39px;background:#7a7a7a"></div>
<svg style="left:48.9296875px;top:628px" width="10" height="12" viewBox="0 0 10 12"><path d="M9.5 0H5.2L0 5.6L5.2 11.2H9.5L4.4 5.6Z" fill="#4a7fbf"/></svg>
<div class="t" style="left:64.9296875px;top:624.61px;font-size:17px;color:#1a1a1a;">None</div>
<div class="t" style="left:181.7421875px;top:624.61px;font-size:17px;color:#1a1a1a;">38%</div>
<svg style="left:222.2578125px;top:628px" width="10" height="12" viewBox="0 0 10 12"><path d="M0 0H4.3L9.5 5.6L4.3 11.2H0L5.1 5.6Z" fill="#4a7fbf"/></svg>
<div class="a" style="left:157.5px;top:650px;width:97.5px;height:5px;background:#e4e4e4"></div>
<div class="a" style="left:157.5px;top:650px;width:37.05px;height:5px;background:#f7b52c"></div>
<svg style="left:310px;top:227px" width="12" height="10" viewBox="0 0 12 10"><rect x="0" y="0" width="12" height="4" fill="#4c5f7d"/><rect x="0" y="5" width="12" height="2" fill="#4c5f7d"/><rect x="0" y="8" width="12" height="2" fill="#4c5f7d"/></svg>
<div class="t" style="left:329px;top:226.00px;font-size:13px;color:#1a1a1a;">System Logical Design</div>
<svg style="left:465px;top:230px" width="8" height="5" viewBox="0 0 8 5"><path d="M0 0H8L4 4.5Z" fill="#b4b4b4"/></svg>
<svg style="left:484px;top:228px" width="10" height="10" viewBox="0 0 10 10"><path d="M0 0.5H10M0 4.5H10M0 8.5H10" stroke="#9a9a9a" stroke-width="1"/></svg>
<div class="a" style="left:302px;top:244px;width:201px;height:1px;background:#7a7a7a"></div>
<div class="a" style="left:302px;top:250px;width:200px;height:337px;border:1px solid #828282;background:#fff"></div>
<div class="a" style="left:486px;top:251px;width:15px;height:335px;border-left:1px solid #828282;background:#e9e9e9"></div>
<div class="a" style="left:487px;top:323px;width:14px;height:3px;background:#7d8ae8"></div>
<div class="a" style="left:487px;top:363px;width:14px;height:3px;background:#7d8ae8"></div>
<div class="a" style="left:487px;top:399px;width:14px;height:3px;background:#7d8ae8"></div>
<div class="a" style="left:487px;top:435px;width:14px;height:3px;background:#7d8ae8"></div>
<div class="a" style="left:487px;top:475px;width:14px;height:3px;background:#7d8ae8"></div>
<div class="a" style="left:487px;top:511px;width:14px;height:3px;background:#7d8ae8"></div>
<div class="a" style="left:487px;top:547px;width:14px;height:3px;background:#7d8ae8"></div>
<div class="a" style="left:303px;top:251px;width:183px;height:20px;overflow:hidden">
<div class="a" style="left:0;top:0;width:183px;height:19px;background:#fff"></div>
<div class="a" style="left:0;top:19px;width:183px;height:1px;background:#d6d6d6"></div>
</div>
<div class="a" style="left:0;top:0;width:1280px;height:271px;overflow:hidden;pointer-events:none">
<svg style="left:324px;top:261px" width="8" height="5" viewBox="0 0 8 5"><path d="M0 0H8L4 4.5Z" fill="#404040"/></svg>
<svg style="left:340px;top:253px" width="16" height="16" viewBox="0 0 16 16"><rect x="0.75" y="0.75" width="14.5" height="14.5" fill="#fff" stroke="#4a5e7c" stroke-width="1.3"/><rect x="2.8" y="2.8" width="10.4" height="10.4" fill="#fff" stroke="#4a5e7c" stroke-width="1.1"/><path d="M5.5 5.5H10.5V10.5M5.5 5.5V10.5" fill="none" stroke="#4a5e7c" stroke-width="1"/><rect x="4.2" y="4.2" width="2.6" height="2.6" fill="#fff" stroke="#4a5e7c" stroke-width="1"/><rect x="4.2" y="9.2" width="2.6" height="2.6" fill="#fff" stroke="#4a5e7c" stroke-width="1"/><rect x="9.2" y="9.2" width="2.6" height="2.6" fill="#fff" stroke="#4a5e7c" stroke-width="1"/></svg>
<div class="t" style="left:359px;top:255.0px;height:17px;width:109px;overflow:hidden;font-size:13px;color:#000">System Functional Design</div>
</div>
<div class="a" style="left:303px;top:271px;width:183px;height:20px;overflow:hidden">
<div class="a" style="left:0;top:0;width:183px;height:19px;background:#fff"></div>
<div class="a" style="left:0;top:19px;width:183px;height:1px;background:#d6d6d6"></div>
</div>
<div class="a" style="left:0;top:0;width:1280px;height:291px;overflow:hidden;pointer-events:none">
<svg style="left:336px;top:281px" width="8" height="5" viewBox="0 0 8 5"><path d="M0 0H8L4 4.5Z" fill="#404040"/></svg>
<svg style="left:352px;top:273px" width="16" height="16" viewBox="0 0 16 16"><path d="M3 3.5L12.5 8L3 12.5" fill="none" stroke="#4f6a8c" stroke-width="1"/><rect x="1" y="1" width="3.5" height="3.5" fill="#fff" stroke="#4f6a8c"/><rect x="1" y="11" width="3.5" height="3.5" fill="#fff" stroke="#4f6a8c"/><rect x="11.5" y="6.5" width="3.5" height="3.5" fill="#fff" stroke="#4f6a8c"/></svg>
<div class="t" style="left:371px;top:275.0px;height:17px;width:97px;overflow:hidden;font-size:13px;color:#000">Adaptive Cruise Control</div>
<svg style="left:310.2px;top:277px" width="3" height="10" viewBox="0 0 3 10"><path d="M0.1 0H2.9L2.5 6.2H0.5Z" fill="#f00a0a"/><rect x="0.4" y="7.2" width="2.2" height="1.9" fill="#f00a0a"/></svg>
</div>
<div class="a" style="left:303px;top:291px;width:183px;height:20px;overflow:hidden">
<div class="a" style="left:0;top:0;width:183px;height:19px;background:#b5c0fc"></div>
<div class="a" style="left:0;top:19px;width:183px;height:1px;background:#d6d6d6"></div>
</div>
<div class="a" style="left:0;top:0;width:1280px;height:311px;overflow:hidden;pointer-events:none">
<svg style="left:348px;top:301px" width="8" height="5" viewBox="0 0 8 5"><path d="M0 0H8L4 4.5Z" fill="#404040"/></svg>
<svg style="left:364px;top:293px" width="16" height="16" viewBox="0 0 16 16"><rect x="3.5" y="0.5" width="10" height="14" fill="#fff" stroke="#555" stroke-width="1.2"/><rect x="0.5" y="3.5" width="5" height="3" fill="#fff" stroke="#555" stroke-width="1.2"/><rect x="0.5" y="8.5" width="5" height="3" fill="#fff" stroke="#555" stroke-width="1.2"/></svg>
<div class="t" style="left:383px;top:295.0px;height:17px;width:85px;overflow:hidden;font-size:13px;color:#000">Calculation of Target</div>
<svg style="left:305px;top:295px" width="15" height="12" viewBox="0 0 15 12"><path d="M1.2 5.2L5.3 9.3L13.2 1.6" fill="none" stroke="#ffffff" stroke-width="4" stroke-opacity="0.6"/><path d="M1.2 5.2L5.3 9.3L13.2 1.6" fill="none" stroke="#29a2e2" stroke-width="2.5"/></svg>
<svg style="left:470px;top:295px" width="15" height="12" viewBox="0 0 15 12"><path d="M1.2 5.2L5.3 9.3L13.2 1.6" fill="none" stroke="#ffffff" stroke-width="4" stroke-opacity="0.6"/><path d="M1.2 5.2L5.3 9.3L13.2 1.6" fill="none" stroke="#29a2e2" stroke-width="2.5"/></svg>
</div>
<div class="a" style="left:303px;top:311px;width:183px;height:20px;overflow:hidden">
<div class="a" style="left:0;top:0;width:183px;height:19px;background:#b5c0fc"></div>
<div class="a" style="left:0;top:19px;width:183px;height:1px;background:#d6d6d6"></div>
</div>
<div class="a" style="left:0;top:0;width:1280px;height:331px;overflow:hidden;pointer-events:none">
<svg style="left:376px;top:313px" width="16" height="16" viewBox="0 0 16 16"><rect x="0.5" y="5.5" width="5" height="6" fill="#fff"/><rect x="1" y="6" width="4" height="5" fill="#555"/><path d="M5 8.5H8" stroke="#555" stroke-width="1"/><rect x="7" y="4.5" width="9" height="8" fill="#fff"/><rect x="8" y="5" width="7" height="7" fill="#555"/></svg>
<div class="t" style="left:395px;top:315.0px;height:17px;width:73px;overflow:hidden;font-size:13px;color:#000">Presence or absence</div>
<svg style="left:474.7px;top:317px" width="3" height="10" viewBox="0 0 3 10"><path d="M0.1 0H2.9L2.5 6.2H0.5Z" fill="#f00a0a"/><rect x="0.4" y="7.2" width="2.2" height="1.9" fill="#f00a0a"/></svg>
</div>
<div class="a" style="left:303px;top:331px;width:183px;height:20px;overflow:hidden">
<div class="a" style="left:0;top:0;width:183px;height:19px;background:#b5c0fc"></div>
<div class="a" style="left:0;top:19px;width:183px;height:1px;background:#d6d6d6"></div>
</div>
<div class="a" style="left:0;top:0;width:1280px;height:351px;overflow:hidden;pointer-events:none">
<svg style="left:376px;top:333px" width="16" height="16" viewBox="0 0 16 16"><rect x="0.5" y="5.5" width="5" height="6" fill="#fff"/><rect x="1" y="6" width="4" height="5" fill="#555"/><path d="M5 8.5H8" stroke="#555" stroke-width="1"/><rect x="7" y="4.5" width="9" height="8" fill="#fff"/><rect x="8" y="5" width="7" height="7" fill="#555"/></svg>
<div class="t" style="left:395px;top:335.0px;height:17px;width:73px;overflow:hidden;font-size:13px;color:#000">Inter-vehicular distance</div>
<svg style="left:474.7px;top:337px" width="3" height="10" viewBox="0 0 3 10"><path d="M0.1 0H2.9L2.5 6.2H0.5Z" fill="#f00a0a"/><rect x="0.4" y="7.2" width="2.2" height="1.9" fill="#f00a0a"/></svg>
</div>
<div class="a" style="left:303px;top:351px;width:183px;height:20px;overflow:hidden">
<div class="a" style="left:0;top:0;width:183px;height:19px;background:#b5c0fc"></div>
<div class="a" style="left:0;top:19px;width:183px;height:1px;background:#d6d6d6"></div>
</div>
<div class="a" style="left:0;top:0;width:1280px;height:371px;overflow:hidden;pointer-events:none">
<svg style="left:376px;top:353px" width="16" height="16" viewBox="0 0 16 16"><rect x="0.5" y="5.5" width="5" height="6" fill="#fff"/><rect x="1" y="6" width="4" height="5" fill="#555"/><path d="M5 8.5H8" stroke="#555" stroke-width="1"/><rect x="7" y="4.5" width="9" height="8" fill="#fff"/><rect x="8" y="5" width="7" height="7" fill="#555"/></svg>
<div class="t" style="left:395px;top:355.0px;height:17px;width:73px;overflow:hidden;font-size:13px;color:#000">C.C. mode</div>
<svg style="left:474.7px;top:357px" width="3" height="10" viewBox="0 0 3 10"><path d="M0.1 0H2.9L2.5 6.2H0.5Z" fill="#f00a0a"/><rect x="0.4" y="7.2" width="2.2" height="1.9" fill="#f00a0a"/></svg>
</div>
<div class="a" style="left:303px;top:371px;width:183px;height:20px;overflow:hidden">
<div class="a" style="left:0;top:0;width:183px;height:19px;background:#b5c0fc"></div>
<div class="a" style="left:0;top:19px;width:183px;height:1px;background:#d6d6d6"></div>
</div>
<div class="a" style="left:0;top:0;width:1280px;height:391px;overflow:hidden;pointer-events:none">
<svg style="left:376px;top:373px" width="16" height="16" viewBox="0 0 16 16"><rect x="0.5" y="5.5" width="5" height="6" fill="#fff"/><rect x="1" y="6" width="4" height="5" fill="#555"/><path d="M5 8.5H8" stroke="#555" stroke-width="1"/><rect x="7" y="4.5" width="9" height="8" fill="#fff"/><rect x="8" y="5" width="7" height="7" fill="#555"/></svg>
<div class="t" style="left:395px;top:375.0px;height:17px;width:73px;overflow:hidden;font-size:13px;color:#000">Vehicle speed</div>
<svg style="left:474.7px;top:377px" width="3" height="10" viewBox="0 0 3 10"><path d="M0.1 0H2.9L2.5 6.2H0.5Z" fill="#f00a0a"/><rect x="0.4" y="7.2" width="2.2" height="1.9" fill="#f00a0a"/></svg>
</div>
<div class="a" style="left:303px;top:391px;width:183px;height:20px;overflow:hidden">
<div class="a" style="left:0;top:0;width:183px;height:19px;background:#b5c0fc"></div>
<div class="a" style="left:0;top:19px;width:183px;height:1px;background:#d6d6d6"></div>
</div>
<div class="a" style="left:0;top:0;width:1280px;height:411px;overflow:hidden;pointer-events:none">
<svg style="left:376px;top:393px" width="16" height="16" viewBox="0 0 16 16"><rect x="0.5" y="5.5" width="5" height="6" fill="#fff"/><rect x="1" y="6" width="4" height="5" fill="#555"/><path d="M5 8.5H8" stroke="#555" stroke-width="1"/><rect x="7" y="4.5" width="9" height="8" fill="#fff"/><rect x="8" y="5" width="7" height="7" fill="#555"/></svg>
<div class="t" style="left:395px;top:395.0px;height:17px;width:73px;overflow:hidden;font-size:13px;color:#000">Vehicle speed</div>
<svg style="left:470px;top:395px" width="15" height="12" viewBox="0 0 15 12"><path d="M1.2 5.2L5.3 9.3L13.2 1.6" fill="none" stroke="#ffffff" stroke-width="4" stroke-opacity="0.6"/><path d="M1.2 5.2L5.3 9.3L13.2 1.6" fill="none" stroke="#29a2e2" stroke-width="2.5"/></svg>
</div>
<div class="a" style="left:303px;top:411px;width:183px;height:20px;overflow:hidden">
<div class="a" style="left:0;top:0;width:183px;height:19px;background:#b5c0fc"></div>
<div class="a" style="left:0;top:19px;width:183px;height:1px;background:#d6d6d6"></div>
</div>
<div class="a" style="left:0;top:0;width:1280px;height:431px;overflow:hidden;pointer-events:none">
<svg style="left:376px;top:413px" width="16" height="16" viewBox="0 0 16 16"><rect x="0.5" y="5.5" width="5" height="6" fill="#fff"/><rect x="1" y="6" width="4" height="5" fill="#555"/><path d="M5 8.5H8" stroke="#555" stroke-width="1"/><rect x="7" y="4.5" width="9" height="8" fill="#fff"/><rect x="8" y="5" width="7" height="7" fill="#555"/></svg>
<div class="t" style="left:395px;top:415.0px;height:17px;width:73px;overflow:hidden;font-size:13px;color:#000">Target acceleration</div>
<svg style="left:470px;top:415px" width="15" height="12" viewBox="0 0 15 12"><path d="M1.2 5.2L5.3 9.3L13.2 1.6" fill="none" stroke="#ffffff" stroke-width="4" stroke-opacity="0.6"/><path d="M1.2 5.2L5.3 9.3L13.2 1.6" fill="none" stroke="#29a2e2" stroke-width="2.5"/></svg>
</div>
<div class="a" style="left:302px;top:586px;width:200px;height:80px;border:1px solid #828282;background:#fcfcfc"></div>
<div class="a" style="left:302px;top:615px;width:200px;height:1px;background:#828282"></div>
<div class="a" style="left:305px;top:589px;width:49px;height:24px;border:1.5px solid #dde0e4;background:#fdfdfd"></div>
<svg style="left:307px;top:593px" width="20" height="16" viewBox="0 0 20 16"><g fill="#fff" stroke="#3f7cc0" stroke-width="1.3"><rect x="3.4" y="9.4" width="4.2" height="3.2"/><rect x="12.4" y="2.2" width="4.3" height="3.2"/><rect x="12.4" y="7.5" width="4.3" height="3.2"/></g><path d="M7.6 11H9.7V3.8H12.4M9.7 9.1H12.4" fill="none" stroke="#3f7cc0" stroke-width="1.3"/><path d="M14.8 10.2H19.2L17 14Z" fill="#333"/></svg>
<div class="a" style="left:329px;top:592px;width:1px;height:18px;background:#a8b8cc"></div>
<svg style="left:338px;top:597px" width="9" height="9" viewBox="0 0 9 9"><path d="M1 1L8 8M8 1L1 8" stroke="#333" stroke-width="2"/></svg>
<div class="a" style="left:402px;top:621px;width:1px;height:39px;background:#7a7a7a"></div>
<svg style="left:327.4921875px;top:628px" width="10" height="12" viewBox="0 0 10 12"><path d="M9.5 0H5.2L0 5.6L5.2 11.2H9.5L4.4 5.6Z" fill="#4a7fbf"/></svg>
<div class="t" style="left:343.4921875px;top:624.61px;font-size:17px;color:#1a1a1a;">33%</div>
<div class="a" style="left:318.0px;top:650px;width:68.0px;height:5px;background:#e4e4e4"></div>
<div class="a" style="left:318.0px;top:650px;width:22.44px;height:5px;background:#f7b52c"></div>
<div class="t" style="left:427.4921875px;top:624.61px;font-size:17px;color:#1a1a1a;">24%</div>
<svg style="left:468.0078125px;top:628px" width="10" height="12" viewBox="0 0 10 12"><path d="M0 0H4.3L9.5 5.6L4.3 11.2H0L5.1 5.6Z" fill="#4a7fbf"/></svg>
<div class="a" style="left:418.0px;top:650px;width:68.0px;height:5px;background:#e4e4e4"></div>
<div class="a" style="left:418.0px;top:650px;width:16.32px;height:5px;background:#d9443f"></div>
<svg style="left:541px;top:227px" width="12" height="10" viewBox="0 0 12 10"><rect x="0" y="0" width="12" height="4" fill="#4c5f7d"/><rect x="0" y="5" width="12" height="2" fill="#4c5f7d"/><rect x="0" y="8" width="12" height="2" fill="#4c5f7d"/></svg>
<div class="t" style="left:560px;top:226.00px;font-size:13px;color:#1a1a1a;">System Physical Des<span style="letter-spacing:-0.5px;color:#8a5050">&middot;&middot;&middot;</span></div>
<svg style="left:696px;top:230px" width="8" height="5" viewBox="0 0 8 5"><path d="M0 0H8L4 4.5Z" fill="#b4b4b4"/></svg>
<svg style="left:715px;top:228px" width="10" height="10" viewBox="0 0 10 10"><path d="M0 0.5H10M0 4.5H10M0 8.5H10" stroke="#9a9a9a" stroke-width="1"/></svg>
<div class="a" style="left:533px;top:244px;width:201px;height:1px;background:#7a7a7a"></div>
<div class="a" style="left:533px;top:250px;width:200px;height:337px;border:1px solid #828282;background:#fff"></div>
<div class="a" style="left:717px;top:251px;width:15px;height:335px;border-left:1px solid #828282;background:#e9e9e9"></div>
<div class="a" style="left:718px;top:363px;width:14px;height:3px;background:#7d8ae8"></div>
<div class="a" style="left:718px;top:419px;width:14px;height:3px;background:#7d8ae8"></div>
<div class="a" style="left:718px;top:475px;width:14px;height:3px;background:#7d8ae8"></div>
<div class="a" style="left:718px;top:531px;width:14px;height:3px;background:#7d8ae8"></div>
<div class="a" style="left:534px;top:251px;width:183px;height:20px;overflow:hidden">
<div class="a" style="left:0;top:0;width:183px;height:19px;background:#fff"></div>
<div class="a" style="left:0;top:19px;width:183px;height:1px;background:#d6d6d6"></div>
</div>
<div class="a" style="left:0;top:0;width:1280px;height:271px;overflow:hidden;pointer-events:none">
<svg style="left:555px;top:261px" width="8" height="5" viewBox="0 0 8 5"><path d="M0 0H8L4 4.5Z" fill="#404040"/></svg>
<svg style="left:571px;top:253px" width="16" height="16" viewBox="0 0 16 16"><rect x="0.6" y="0.6" width="14.8" height="14.8" fill="#fff" stroke="#4a5e7c" stroke-width="1.1"/><rect x="1.2" y="1.2" width="7" height="6" fill="#f0f0f0"/><rect x="8.5" y="2.5" width="5" height="4" fill="#fff" stroke="#4a5e7c" stroke-width="1.1"/><path d="M7 3.5H8.5M7 5.5H8.5" stroke="#4a5e7c" stroke-width="1"/><rect x="2.5" y="9" width="4.5" height="4.5" fill="#fff" stroke="#4a5e7c" stroke-width="1.1"/><rect x="9" y="9" width="4.5" height="4.5" fill="#fff" stroke="#4a5e7c" stroke-width="1.1"/><path d="M7 11.25H9" stroke="#4a5e7c" stroke-width="1.1"/><circle cx="4.75" cy="11.25" r="0.7" fill="#4a5e7c"/><circle cx="11.25" cy="11.25" r="0.7" fill="#4a5e7c"/></svg>
<div class="t" style="left:590px;top:255.0px;height:17px;width:109px;overflow:hidden;font-size:13px;color:#000">System Physical Design</div>
</div>
<div class="a" style="left:534px;top:271px;width:183px;height:20px;overflow:hidden">
<div class="a" style="left:0;top:0;width:183px;height:19px;background:#fff"></div>
<div class="a" style="left:0;top:19px;width:183px;height:1px;background:#d6d6d6"></div>
</div>
<div class="a" style="left:0;top:0;width:1280px;height:291px;overflow:hidden;pointer-events:none">
<svg style="left:567px;top:281px" width="8" height="5" viewBox="0 0 8 5"><path d="M0 0H8L4 4.5Z" fill="#404040"/></svg>
<svg style="left:583px;top:273px" width="16" height="16" viewBox="0 0 16 16"><rect x="1" y="4" width="13" height="7.5" fill="#fff" stroke="#505050" stroke-width="2"/><path d="M3.5 1V3.5M7.5 1V3.5M11.5 1V3.5M3.5 12V14.5M7.5 12V14.5M11.5 12V14.5" stroke="#505050" stroke-width="1.6"/><rect x="3.5" y="6.5" width="8" height="2.5" fill="#505050"/></svg>
<div class="t" style="left:602px;top:275.0px;height:17px;width:97px;overflow:hidden;font-size:13px;color:#000">ADAS ECU</div>
<svg style="left:536px;top:275px" width="15" height="12" viewBox="0 0 15 12"><path d="M1.2 5.2L5.3 9.3L13.2 1.6" fill="none" stroke="#ffffff" stroke-width="4" stroke-opacity="0.6"/><path d="M1.2 5.2L5.3 9.3L13.2 1.6" fill="none" stroke="#29a2e2" stroke-width="2.5"/></svg>
</div>
<div class="a" style="left:534px;top:291px;width:183px;height:20px;overflow:hidden">
<div class="a" style="left:0;top:0;width:183px;height:19px;background:#b5c0fc"></div>
<div class="a" style="left:0;top:19px;width:183px;height:1px;background:#d6d6d6"></div>
</div>
<div class="a" style="left:0;top:0;width:1280px;height:311px;overflow:hidden;pointer-events:none">
<svg style="left:595px;top:293px" width="16" height="16" viewBox="0 0 16 16"><path d="M7.5 0.5V16" stroke="#555" stroke-width="1.2"/><rect x="4.5" y="4.5" width="6" height="8" fill="#fff" stroke="#555" stroke-width="1.2"/><path d="M6 6.5L9 8.5L6 10.5Z" fill="#555"/></svg>
<div class="t" style="left:614px;top:295.0px;height:17px;width:85px;overflow:hidden;font-size:13px;color:#000">Vehicle speed</div>
<svg style="left:536px;top:295px" width="15" height="12" viewBox="0 0 15 12"><path d="M1.2 5.2L5.3 9.3L13.2 1.6" fill="none" stroke="#ffffff" stroke-width="4" stroke-opacity="0.6"/><path d="M1.2 5.2L5.3 9.3L13.2 1.6" fill="none" stroke="#29a2e2" stroke-width="2.5"/></svg>
</div>
<div class="a" style="left:534px;top:311px;width:183px;height:20px;overflow:hidden">
<div class="a" style="left:0;top:0;width:183px;height:19px;background:#b5c0fc"></div>
<div class="a" style="left:0;top:19px;width:183px;height:1px;background:#d6d6d6"></div>
</div>
<div class="a" style="left:0;top:0;width:1280px;height:331px;overflow:hidden;pointer-events:none">
<svg style="left:595px;top:313px" width="16" height="16" viewBox="0 0 16 16"><path d="M7.5 0.5V16" stroke="#555" stroke-width="1.2"/><rect x="4.5" y="4.5" width="6" height="8" fill="#fff" stroke="#555" stroke-width="1.2"/><path d="M9 6.5L6 8.5L9 10.5Z" fill="#555"/></svg>
<div class="t" style="left:614px;top:315.0px;height:17px;width:85px;overflow:hidden;font-size:13px;color:#000">Target acceleration</div>
<svg style="left:536px;top:315px" width="15" height="12" viewBox="0 0 15 12"><path d="M1.2 5.2L5.3 9.3L13.2 1.6" fill="none" stroke="#ffffff" stroke-width="4" stroke-opacity="0.6"/><path d="M1.2 5.2L5.3 9.3L13.2 1.6" fill="none" stroke="#29a2e2" stroke-width="2.5"/></svg>
</div>
<div class="a" style="left:534px;top:331px;width:183px;height:20px;overflow:hidden">
<div class="a" style="left:0;top:0;width:183px;height:19px;background:#b5c0fc"></div>
<div class="a" style="left:0;top:19px;width:183px;height:1px;background:#d6d6d6"></div>
</div>
<div class="a" style="left:0;top:0;width:1280px;height:351px;overflow:hidden;pointer-events:none">
<svg style="left:595px;top:333px" width="16" height="16" viewBox="0 0 16 16"><path d="M7.5 0.5V16" stroke="#555" stroke-width="1.2"/><rect x="4.5" y="4.5" width="6" height="8" fill="#fff" stroke="#555" stroke-width="1.2"/><path d="M9 6.5L6 8.5L9 10.5Z" fill="#555"/></svg>
<div class="t" style="left:614px;top:335.0px;height:17px;width:85px;overflow:hidden;font-size:13px;color:#000">Brake required</div>
<svg style="left:536px;top:335px" width="15" height="12" viewBox="0 0 15 12"><path d="M1.2 5.2L5.3 9.3L13.2 1.6" fill="none" stroke="#ffffff" stroke-width="4" stroke-opacity="0.6"/><path d="M1.2 5.2L5.3 9.3L13.2 1.6" fill="none" stroke="#29a2e2" stroke-width="2.5"/></svg>
</div>
<div class="a" style="left:534px;top:351px;width:183px;height:20px;overflow:hidden">
<div class="a" style="left:0;top:0;width:183px;height:19px;background:#b5c0fc"></div>
<div class="a" style="left:0;top:19px;width:183px;height:1px;background:#d6d6d6"></div>
</div>
<div class="a" style="left:0;top:0;width:1280px;height:371px;overflow:hidden;pointer-events:none">
<svg style="left:594px;top:352px" width="19" height="19" viewBox="0 0 19 19"><path d="M18.10,11.50L17.97,12.79L16.03,13.38L15.57,14.22L16.17,16.17L15.17,16.99L13.38,16.03L12.46,16.31L11.50,18.10L10.21,17.97L9.62,16.03L8.78,15.57L6.83,16.17L6.01,15.17L6.97,13.38L6.69,12.46L4.90,11.50L5.03,10.21L6.97,9.62L7.43,8.78L6.83,6.83L7.83,6.01L9.62,6.97L10.54,6.69L11.50,4.90L12.79,5.03L13.38,6.97L14.22,7.43L16.17,6.83L16.99,7.83L16.03,9.62L16.31,10.54Z" fill="#6a6a6a"/><circle cx="11.5" cy="11.5" r="2" fill="#fff"/><path d="M8.10,4.50L7.98,5.43L6.75,5.80L6.34,6.34L6.30,7.62L5.43,7.98L4.50,7.10L3.83,7.01L2.70,7.62L1.95,7.05L2.25,5.80L1.99,5.17L0.90,4.50L1.02,3.57L2.25,3.20L2.66,2.66L2.70,1.38L3.57,1.02L4.50,1.90L5.17,1.99L6.30,1.38L7.05,1.95L6.75,3.20L7.01,3.83Z" fill="#4a7ab5"/><circle cx="4.5" cy="4.5" r="1.1" fill="#fff"/></svg>
<div class="t" style="left:614px;top:355.0px;height:17px;width:85px;overflow:hidden;font-size:13px;color:#000">Calculation of Target</div>
<svg style="left:536px;top:355px" width="15" height="12" viewBox="0 0 15 12"><path d="M1.2 5.2L5.3 9.3L13.2 1.6" fill="none" stroke="#ffffff" stroke-width="4" stroke-opacity="0.6"/><path d="M1.2 5.2L5.3 9.3L13.2 1.6" fill="none" stroke="#29a2e2" stroke-width="2.5"/></svg>
<svg style="left:701px;top:355px" width="15" height="12" viewBox="0 0 15 12"><path d="M1.2 5.2L5.3 9.3L13.2 1.6" fill="none" stroke="#ffffff" stroke-width="4" stroke-opacity="0.6"/><path d="M1.2 5.2L5.3 9.3L13.2 1.6" fill="none" stroke="#29a2e2" stroke-width="2.5"/></svg>
</div>
<div class="a" style="left:533px;top:586px;width:200px;height:80px;border:1px solid #828282;background:#fcfcfc"></div>
<div class="a" style="left:533px;top:615px;width:200px;height:1px;background:#828282"></div>
<div class="a" style="left:536px;top:589px;width:49px;height:24px;border:1.5px solid #dde0e4;background:#fdfdfd"></div>
<svg style="left:538px;top:593px" width="20" height="16" viewBox="0 0 20 16"><g fill="#fff" stroke="#3f7cc0" stroke-width="1.3"><rect x="3.4" y="9.4" width="4.2" height="3.2"/><rect x="12.4" y="2.2" width="4.3" height="3.2"/><rect x="12.4" y="7.5" width="4.3" height="3.2"/></g><path d="M7.6 11H9.7V3.8H12.4M9.7 9.1H12.4" fill="none" stroke="#3f7cc0" stroke-width="1.3"/><path d="M14.8 10.2H19.2L17 14Z" fill="#333"/></svg>
<div class="a" style="left:560px;top:592px;width:1px;height:18px;background:#a8b8cc"></div>
<svg style="left:569px;top:597px" width="9" height="9" viewBox="0 0 9 9"><path d="M1 1L8 8M8 1L1 8" stroke="#333" stroke-width="2"/></svg>
<div class="a" style="left:633px;top:621px;width:1px;height:39px;background:#7a7a7a"></div>
<svg style="left:558.4921875px;top:628px" width="10" height="12" viewBox="0 0 10 12"><path d="M9.5 0H5.2L0 5.6L5.2 11.2H9.5L4.4 5.6Z" fill="#4a7fbf"/></svg>
<div class="t" style="left:574.4921875px;top:624.61px;font-size:17px;color:#1a1a1a;">23%</div>
<div class="a" style="left:549.0px;top:650px;width:68.0px;height:5px;background:#e4e4e4"></div>
<div class="a" style="left:549.0px;top:650px;width:15.64px;height:5px;background:#d9443f"></div>
<div class="t" style="left:658.4921875px;top:624.61px;font-size:17px;color:#1a1a1a;">64%</div>
<svg style="left:699.0078125px;top:628px" width="10" height="12" viewBox="0 0 10 12"><path d="M0 0H4.3L9.5 5.6L4.3 11.2H0L5.1 5.6Z" fill="#4a7fbf"/></svg>
<div class="a" style="left:649.0px;top:650px;width:68.0px;height:5px;background:#e4e4e4"></div>
<div class="a" style="left:649.0px;top:650px;width:43.52px;height:5px;background:#f7b52c"></div>
<svg style="left:772px;top:227px" width="12" height="10" viewBox="0 0 12 10"><rect x="0" y="0" width="12" height="4" fill="#4c5f7d"/><rect x="0" y="5" width="12" height="2" fill="#4c5f7d"/><rect x="0" y="8" width="12" height="2" fill="#4c5f7d"/></svg>
<div class="t" style="left:791px;top:226.00px;font-size:13px;color:#1a1a1a;">Software Requireme<span style="letter-spacing:-0.5px;color:#8a5050">&middot;&middot;&middot;</span></div>
<svg style="left:927px;top:230px" width="8" height="5" viewBox="0 0 8 5"><path d="M0 0H8L4 4.5Z" fill="#b4b4b4"/></svg>
<svg style="left:946px;top:228px" width="10" height="10" viewBox="0 0 10 10"><path d="M0 0.5H10M0 4.5H10M0 8.5H10" stroke="#9a9a9a" stroke-width="1"/></svg>
<div class="a" style="left:764px;top:244px;width:201px;height:1px;background:#7a7a7a"></div>
<div class="a" style="left:764px;top:250px;width:200px;height:337px;border:1px solid #828282;background:#fff"></div>
<div class="a" style="left:948px;top:251px;width:15px;height:335px;border-left:1px solid #828282;background:#e9e9e9"></div>
<div class="a" style="left:949px;top:377px;width:14px;height:209px;background:#ffffff"></div>
<div class="a" style="left:949px;top:295px;width:14px;height:3px;background:#7d8ae8"></div>
<div class="a" style="left:949px;top:303px;width:14px;height:3px;background:#7d8ae8"></div>
<div class="a" style="left:949px;top:311px;width:14px;height:3px;background:#7d8ae8"></div>
<div class="a" style="left:949px;top:319px;width:14px;height:3px;background:#7d8ae8"></div>
<div class="a" style="left:949px;top:351px;width:14px;height:3px;background:#7d8ae8"></div>
<div class="a" style="left:949px;top:359px;width:14px;height:3px;background:#7d8ae8"></div>
<div class="a" style="left:949px;top:367px;width:14px;height:3px;background:#7d8ae8"></div>
<div class="a" style="left:949px;top:375px;width:14px;height:3px;background:#7d8ae8"></div>
<div class="a" style="left:949px;top:383px;width:14px;height:3px;background:#7d8ae8"></div>
<div class="a" style="left:949px;top:391px;width:14px;height:3px;background:#7d8ae8"></div>
<div class="a" style="left:949px;top:407px;width:14px;height:3px;background:#7d8ae8"></div>
<div class="a" style="left:949px;top:415px;width:14px;height:3px;background:#7d8ae8"></div>
<div class="a" style="left:949px;top:419px;width:14px;height:3px;background:#7d8ae8"></div>
<div class="a" style="left:949px;top:427px;width:14px;height:3px;background:#7d8ae8"></div>
<div class="a" style="left:949px;top:435px;width:14px;height:3px;background:#7d8ae8"></div>
<div class="a" style="left:949px;top:443px;width:14px;height:3px;background:#7d8ae8"></div>
<div class="a" style="left:949px;top:451px;width:14px;height:3px;background:#7d8ae8"></div>
<div class="a" style="left:949px;top:459px;width:14px;height:3px;background:#7d8ae8"></div>
<div class="a" style="left:949px;top:467px;width:14px;height:3px;background:#7d8ae8"></div>
<div class="a" style="left:949px;top:475px;width:14px;height:3px;background:#7d8ae8"></div>
<div class="a" style="left:949px;top:483px;width:14px;height:3px;background:#7d8ae8"></div>
<div class="a" style="left:949px;top:491px;width:14px;height:3px;background:#7d8ae8"></div>
<div class="a" style="left:949px;top:499px;width:14px;height:3px;background:#7d8ae8"></div>
<div class="a" style="left:949px;top:507px;width:14px;height:3px;background:#7d8ae8"></div>
<div class="a" style="left:949px;top:515px;width:14px;height:3px;background:#7d8ae8"></div>
<div class="a" style="left:949px;top:531px;width:14px;height:3px;background:#7d8ae8"></div>
<div class="a" style="left:949px;top:539px;width:14px;height:3px;background:#7d8ae8"></div>
<div class="a" style="left:949px;top:547px;width:14px;height:3px;background:#7d8ae8"></div>
<div class="a" style="left:949px;top:555px;width:14px;height:3px;background:#7d8ae8"></div>
<div class="a" style="left:949px;top:563px;width:14px;height:3px;background:#7d8ae8"></div>
<div class="a" style="left:949px;top:571px;width:14px;height:3px;background:#7d8ae8"></div>
<div class="a" style="left:949px;top:579px;width:14px;height:3px;background:#7d8ae8"></div>
<div class="a" style="left:765px;top:251px;width:183px;height:20px;overflow:hidden">
<div class="a" style="left:0;top:0;width:183px;height:19px;background:#fff"></div>
<div class="a" style="left:0;top:19px;width:183px;height:1px;background:#d6d6d6"></div>
</div>
<div class="a" style="left:0;top:0;width:1280px;height:271px;overflow:hidden;pointer-events:none">
<svg style="left:786px;top:261px" width="8" height="5" viewBox="0 0 8 5"><path d="M0 0H8L4 4.5Z" fill="#404040"/></svg>
<svg style="left:802px;top:253px" width="16" height="16" viewBox="0 0 16 16"><rect x="0.5" y="0.5" width="15" height="15" fill="#fff" stroke="#4f6a8c"/><rect x="4.5" y="3" width="7" height="3" fill="#fff" stroke="#4f6a8c" stroke-width="1.3"/><path d="M8 6V8M4 11V8.5H12V11" fill="none" stroke="#4f6a8c" stroke-width="1.2"/><rect x="2.5" y="10.5" width="4" height="3" fill="#fff" stroke="#4f6a8c" stroke-width="1.3"/><rect x="9.5" y="10.5" width="4" height="3" fill="#fff" stroke="#4f6a8c" stroke-width="1.3"/></svg>
<div class="t" style="left:821px;top:255.0px;height:17px;width:109px;overflow:hidden;font-size:13px;color:#000">Software Requirements</div>
</div>
<div class="a" style="left:765px;top:271px;width:183px;height:20px;overflow:hidden">
<div class="a" style="left:0;top:0;width:183px;height:19px;background:#fff"></div>
<div class="a" style="left:0;top:19px;width:183px;height:1px;background:#d6d6d6"></div>
</div>
<div class="a" style="left:0;top:0;width:1280px;height:291px;overflow:hidden;pointer-events:none">
<svg style="left:798px;top:281px" width="8" height="5" viewBox="0 0 8 5"><path d="M0 0H8L4 4.5Z" fill="#404040"/></svg>
<svg style="left:814px;top:273px" width="16" height="16" viewBox="0 0 16 16"><rect x="0.75" y="0.75" width="14.5" height="14.5" fill="#fff" stroke="#6a6a6a" stroke-width="1.5"/><rect x="1.5" y="1.5" width="13" height="2.5" fill="#ffffff"/><path d="M1 4.75H15" stroke="#6a6a6a" stroke-width="1.5"/><path d="M6.2 13.6V6.9H8.6Q10.6 6.9 10.6 8.6Q10.6 10.3 8.6 10.3H6.2M8.4 10.3L10.9 13.6" fill="none" stroke="#505050" stroke-width="0.95"/></svg>
<div class="t" style="left:833px;top:275.0px;height:17px;width:97px;overflow:hidden;font-size:13px;color:#000">ADAS&nbsp; ECU</div>
</div>
<div class="a" style="left:765px;top:291px;width:183px;height:20px;overflow:hidden">
<div class="a" style="left:0;top:0;width:183px;height:19px;background:#fff"></div>
<div class="a" style="left:0;top:19px;width:183px;height:1px;background:#d6d6d6"></div>
</div>
<div class="a" style="left:0;top:0;width:1280px;height:311px;overflow:hidden;pointer-events:none">
<svg style="left:810px;top:301px" width="8" height="5" viewBox="0 0 8 5"><path d="M0 0H8L4 4.5Z" fill="#404040"/></svg>
<svg style="left:826px;top:293px" width="16" height="16" viewBox="0 0 16 16"><rect x="0.75" y="0.75" width="14.5" height="14.5" fill="#fff" stroke="#1f6e9e" stroke-width="1.5"/><rect x="1.5" y="1.5" width="13" height="2.5" fill="#d6ebfa"/><path d="M1 4.75H15" stroke="#1f6e9e" stroke-width="1.5"/><path d="M6.2 13.6V6.9H8.6Q10.6 6.9 10.6 8.6Q10.6 10.3 8.6 10.3H6.2M8.4 10.3L10.9 13.6" fill="none" stroke="#505050" stroke-width="0.95"/></svg>
<div class="t" style="left:845px;top:295.0px;height:17px;width:85px;overflow:hidden;font-size:13px;color:#000">Adaptive Cruise Control</div>
<svg style="left:772.2px;top:297px" width="3" height="10" viewBox="0 0 3 10"><path d="M0.1 0H2.9L2.5 6.2H0.5Z" fill="#f00a0a"/><rect x="0.4" y="7.2" width="2.2" height="1.9" fill="#f00a0a"/></svg>
<svg style="left:936.7px;top:297px" width="3" height="10" viewBox="0 0 3 10"><path d="M0.1 0H2.9L2.5 6.2H0.5Z" fill="#f00a0a"/><rect x="0.4" y="7.2" width="2.2" height="1.9" fill="#f00a0a"/></svg>
</div>
<div class="a" style="left:765px;top:311px;width:183px;height:20px;overflow:hidden">
<div class="a" style="left:0;top:0;width:183px;height:19px;background:#fff"></div>
<div class="a" style="left:0;top:19px;width:183px;height:1px;background:#d6d6d6"></div>
</div>
<div class="a" style="left:0;top:0;width:1280px;height:331px;overflow:hidden;pointer-events:none">
<svg style="left:822px;top:321px" width="8" height="5" viewBox="0 0 8 5"><path d="M0 0H8L4 4.5Z" fill="#404040"/></svg>
<svg style="left:838px;top:313px" width="16" height="16" viewBox="0 0 16 16"><rect x="0.75" y="0.75" width="14.5" height="14.5" fill="#fff" stroke="#1f6e9e" stroke-width="1.5"/><rect x="1.5" y="1.5" width="13" height="2.5" fill="#d6ebfa"/><path d="M1 4.75H15" stroke="#1f6e9e" stroke-width="1.5"/><path d="M6.2 13.6V6.9H8.6Q10.6 6.9 10.6 8.6Q10.6 10.3 8.6 10.3H6.2M8.4 10.3L10.9 13.6" fill="none" stroke="#505050" stroke-width="0.95"/></svg>
<div class="t" style="left:857px;top:315.0px;height:17px;width:73px;overflow:hidden;font-size:13px;color:#000">CRUISE driving</div>
<svg style="left:772.2px;top:317px" width="3" height="10" viewBox="0 0 3 10"><path d="M0.1 0H2.9L2.5 6.2H0.5Z" fill="#f00a0a"/><rect x="0.4" y="7.2" width="2.2" height="1.9" fill="#f00a0a"/></svg>
<svg style="left:936.7px;top:317px" width="3" height="10" viewBox="0 0 3 10"><path d="M0.1 0H2.9L2.5 6.2H0.5Z" fill="#f00a0a"/><rect x="0.4" y="7.2" width="2.2" height="1.9" fill="#f00a0a"/></svg>
</div>
<div class="a" style="left:765px;top:331px;width:183px;height:20px;overflow:hidden">
<div class="a" style="left:0;top:0;width:183px;height:19px;background:#fff"></div>
<div class="a" style="left:0;top:19px;width:183px;height:1px;background:#d6d6d6"></div>
</div>
<div class="a" style="left:0;top:0;width:1280px;height:351px;overflow:hidden;pointer-events:none">
<svg style="left:834px;top:341px" width="8" height="5" viewBox="0 0 8 5"><path d="M0 0H8L4 4.5Z" fill="#404040"/></svg>
<svg style="left:850px;top:333px" width="16" height="16" viewBox="0 0 16 16"><rect x="0.75" y="0.75" width="14.5" height="14.5" fill="#fff" stroke="#1f6e9e" stroke-width="1.5"/><rect x="1.5" y="1.5" width="13" height="2.5" fill="#d6ebfa"/><path d="M1 4.75H15" stroke="#1f6e9e" stroke-width="1.5"/><path d="M6.2 13.6V6.9H8.6Q10.6 6.9 10.6 8.6Q10.6 10.3 8.6 10.3H6.2M8.4 10.3L10.9 13.6" fill="none" stroke="#505050" stroke-width="0.95"/></svg>
<div class="t" style="left:869px;top:335.0px;height:17px;width:61px;overflow:hidden;font-size:13px;color:#000">Driving</div>
<svg style="left:772.2px;top:337px" width="3" height="10" viewBox="0 0 3 10"><path d="M0.1 0H2.9L2.5 6.2H0.5Z" fill="#f00a0a"/><rect x="0.4" y="7.2" width="2.2" height="1.9" fill="#f00a0a"/></svg>
<svg style="left:936.7px;top:337px" width="3" height="10" viewBox="0 0 3 10"><path d="M0.1 0H2.9L2.5 6.2H0.5Z" fill="#f00a0a"/><rect x="0.4" y="7.2" width="2.2" height="1.9" fill="#f00a0a"/></svg>
</div>
<div class="a" style="left:765px;top:351px;width:183px;height:20px;overflow:hidden">
<div class="a" style="left:0;top:0;width:183px;height:19px;background:#fff"></div>
<div class="a" style="left:0;top:19px;width:183px;height:1px;background:#d6d6d6"></div>
</div>
<div class="a" style="left:0;top:0;width:1280px;height:371px;overflow:hidden;pointer-events:none">
<svg style="left:846px;top:361px" width="8" height="5" viewBox="0 0 8 5"><path d="M0 0H8L4 4.5Z" fill="#404040"/></svg>
<svg style="left:862px;top:353px" width="16" height="16" viewBox="0 0 16 16"><rect x="0.75" y="0.75" width="14.5" height="14.5" fill="#fff" stroke="#1f6e9e" stroke-width="1.5"/><rect x="1.5" y="1.5" width="13" height="2.5" fill="#d6ebfa"/><path d="M1 4.75H15" stroke="#1f6e9e" stroke-width="1.5"/><path d="M6.2 13.6V6.9H8.6Q10.6 6.9 10.6 8.6Q10.6 10.3 8.6 10.3H6.2M8.4 10.3L10.9 13.6" fill="none" stroke="#505050" stroke-width="0.95"/></svg>
<div class="t" style="left:881px;top:355.0px;height:17px;width:49px;overflow:hidden;font-size:13px;color:#000">Doing CRUISE</div>
<svg style="left:772.2px;top:357px" width="3" height="10" viewBox="0 0 3 10"><path d="M0.1 0H2.9L2.5 6.2H0.5Z" fill="#f00a0a"/><rect x="0.4" y="7.2" width="2.2" height="1.9" fill="#f00a0a"/></svg>
<svg style="left:936.7px;top:357px" width="3" height="10" viewBox="0 0 3 10"><path d="M0.1 0H2.9L2.5 6.2H0.5Z" fill="#f00a0a"/><rect x="0.4" y="7.2" width="2.2" height="1.9" fill="#f00a0a"/></svg>
</div>
<div class="a" style="left:765px;top:371px;width:183px;height:20px;overflow:hidden">
<div class="a" style="left:0;top:0;width:183px;height:19px;background:#b5c0fc"></div>
<div class="a" style="left:0;top:19px;width:183px;height:1px;background:#d6d6d6"></div>
</div>
<div class="a" style="left:0;top:0;width:1280px;height:391px;overflow:hidden;pointer-events:none">
<svg style="left:858px;top:381px" width="8" height="5" viewBox="0 0 8 5"><path d="M0 0H8L4 4.5Z" fill="#404040"/></svg>
<svg style="left:874px;top:373px" width="16" height="16" viewBox="0 0 16 16"><rect x="0.75" y="0.75" width="14.5" height="14.5" fill="#fff" stroke="#1f6e9e" stroke-width="1.5"/><rect x="1.5" y="1.5" width="13" height="2.5" fill="#d6ebfa"/><path d="M1 4.75H15" stroke="#1f6e9e" stroke-width="1.5"/><path d="M6.2 13.6V6.9H8.6Q10.6 6.9 10.6 8.6Q10.6 10.3 8.6 10.3H6.2M8.4 10.3L10.9 13.6" fill="none" stroke="#505050" stroke-width="0.95"/></svg>
<div class="t" style="left:893px;top:375.0px;height:17px;width:37px;overflow:hidden;font-size:13px;color:#000">Calculation</div>
<svg style="left:767px;top:375px" width="15" height="12" viewBox="0 0 15 12"><path d="M1.2 5.2L5.3 9.3L13.2 1.6" fill="none" stroke="#ffffff" stroke-width="4" stroke-opacity="0.6"/><path d="M1.2 5.2L5.3 9.3L13.2 1.6" fill="none" stroke="#29a2e2" stroke-width="2.5"/></svg>
<svg style="left:932px;top:375px" width="15" height="12" viewBox="0 0 15 12"><path d="M1.2 5.2L5.3 9.3L13.2 1.6" fill="none" stroke="#ffffff" stroke-width="4" stroke-opacity="0.6"/><path d="M1.2 5.2L5.3 9.3L13.2 1.6" fill="none" stroke="#29a2e2" stroke-width="2.5"/></svg>
</div>
<div class="a" style="left:765px;top:391px;width:183px;height:20px;overflow:hidden">
<div class="a" style="left:0;top:0;width:183px;height:19px;background:#b5c0fc"></div>
<div class="a" style="left:0;top:19px;width:183px;height:1px;background:#d6d6d6"></div>
</div>
<div class="a" style="left:0;top:0;width:1280px;height:411px;overflow:hidden;pointer-events:none">
<svg style="left:886px;top:393px" width="16" height="16" viewBox="0 0 16 16"><path d="M2.5 0.5H9.5L13.5 4.5V15.5H2.5Z" fill="#fff" stroke="#555"/><path d="M9.5 0.5V4.5H13.5" fill="none" stroke="#555"/><path d="M4.5 7H11.5M4.5 9.5H11.5M4.5 12H11.5" stroke="#555" stroke-width="0.9"/></svg>
<div class="t" style="left:905px;top:395.0px;height:17px;width:25px;overflow:hidden;font-size:13px;color:#000">T.B.D</div>
<svg style="left:936.7px;top:397px" width="3" height="10" viewBox="0 0 3 10"><path d="M0.1 0H2.9L2.5 6.2H0.5Z" fill="#f00a0a"/><rect x="0.4" y="7.2" width="2.2" height="1.9" fill="#f00a0a"/></svg>
</div>
<div class="a" style="left:765px;top:411px;width:183px;height:20px;overflow:hidden">
<div class="a" style="left:0;top:0;width:183px;height:19px;background:#b5c0fc"></div>
<div class="a" style="left:0;top:19px;width:183px;height:1px;background:#d6d6d6"></div>
</div>
<div class="a" style="left:0;top:0;width:1280px;height:431px;overflow:hidden;pointer-events:none">
<svg style="left:858px;top:421px" width="8" height="5" viewBox="0 0 8 5"><path d="M0 0H8L4 4.5Z" fill="#404040"/></svg>
<svg style="left:874px;top:413px" width="16" height="16" viewBox="0 0 16 16"><rect x="0.75" y="0.75" width="14.5" height="14.5" fill="#fff" stroke="#1f6e9e" stroke-width="1.5"/><rect x="1.5" y="1.5" width="13" height="2.5" fill="#d6ebfa"/><path d="M1 4.75H15" stroke="#1f6e9e" stroke-width="1.5"/><path d="M6.2 13.6V6.9H8.6Q10.6 6.9 10.6 8.6Q10.6 10.3 8.6 10.3H6.2M8.4 10.3L10.9 13.6" fill="none" stroke="#505050" stroke-width="0.95"/></svg>
<div class="t" style="left:893px;top:415.0px;height:17px;width:37px;overflow:hidden;font-size:13px;color:#000">Engine</div>
<svg style="left:767px;top:415px" width="15" height="12" viewBox="0 0 15 12"><path d="M1.2 5.2L5.3 9.3L13.2 1.6" fill="none" stroke="#ffffff" stroke-width="4" stroke-opacity="0.6"/><path d="M1.2 5.2L5.3 9.3L13.2 1.6" fill="none" stroke="#29a2e2" stroke-width="2.5"/></svg>
<svg style="left:932px;top:415px" width="15" height="12" viewBox="0 0 15 12"><path d="M1.2 5.2L5.3 9.3L13.2 1.6" fill="none" stroke="#ffffff" stroke-width="4" stroke-opacity="0.6"/><path d="M1.2 5.2L5.3 9.3L13.2 1.6" fill="none" stroke="#29a2e2" stroke-width="2.5"/></svg>
</div>
<div class="a" style="left:765px;top:431px;width:183px;height:20px;overflow:hidden">
<div class="a" style="left:0;top:0;width:183px;height:19px;background:#b5c0fc"></div>
<div class="a" style="left:0;top:19px;width:183px;height:1px;background:#d6d6d6"></div>
</div>
<div class="a" style="left:0;top:0;width:1280px;height:451px;overflow:hidden;pointer-events:none">
<svg style="left:886px;top:433px" width="16" height="16" viewBox="0 0 16 16"><path d="M2.5 0.5H9.5L13.5 4.5V15.5H2.5Z" fill="#fff" stroke="#555"/><path d="M9.5 0.5V4.5H13.5" fill="none" stroke="#555"/><path d="M4.5 7H11.5M4.5 9.5H11.5M4.5 12H11.5" stroke="#555" stroke-width="0.9"/></svg>
<div class="t" style="left:905px;top:435.0px;height:17px;width:25px;overflow:hidden;font-size:13px;color:#000">T.B.D</div>
<svg style="left:936.7px;top:437px" width="3" height="10" viewBox="0 0 3 10"><path d="M0.1 0H2.9L2.5 6.2H0.5Z" fill="#f00a0a"/><rect x="0.4" y="7.2" width="2.2" height="1.9" fill="#f00a0a"/></svg>
</div>
<div class="a" style="left:765px;top:451px;width:183px;height:20px;overflow:hidden">
<div class="a" style="left:0;top:0;width:183px;height:19px;background:#fff"></div>
<div class="a" style="left:0;top:19px;width:183px;height:1px;background:#d6d6d6"></div>
</div>
<div class="a" style="left:0;top:0;width:1280px;height:471px;overflow:hidden;pointer-events:none">
<svg style="left:822px;top:461px" width="8" height="5" viewBox="0 0 8 5"><path d="M0 0H8L4 4.5Z" fill="#404040"/></svg>
<svg style="left:838px;top:453px" width="16" height="16" viewBox="0 0 16 16"><rect x="0.75" y="0.75" width="14.5" height="14.5" fill="#fff" stroke="#1f6e9e" stroke-width="1.5"/><rect x="1.5" y="1.5" width="13" height="2.5" fill="#d6ebfa"/><path d="M1 4.75H15" stroke="#1f6e9e" stroke-width="1.5"/><path d="M6.2 13.6V6.9H8.6Q10.6 6.9 10.6 8.6Q10.6 10.3 8.6 10.3H6.2M8.4 10.3L10.9 13.6" fill="none" stroke="#505050" stroke-width="0.95"/></svg>
<div class="t" style="left:857px;top:455.0px;height:17px;width:73px;overflow:hidden;font-size:13px;color:#000">ADAPTIVE driving</div>
<svg style="left:772.2px;top:457px" width="3" height="10" viewBox="0 0 3 10"><path d="M0.1 0H2.9L2.5 6.2H0.5Z" fill="#f00a0a"/><rect x="0.4" y="7.2" width="2.2" height="1.9" fill="#f00a0a"/></svg>
<svg style="left:936.7px;top:457px" width="3" height="10" viewBox="0 0 3 10"><path d="M0.1 0H2.9L2.5 6.2H0.5Z" fill="#f00a0a"/><rect x="0.4" y="7.2" width="2.2" height="1.9" fill="#f00a0a"/></svg>
</div>
<div class="a" style="left:765px;top:471px;width:183px;height:20px;overflow:hidden">
<div class="a" style="left:0;top:0;width:183px;height:19px;background:#fff"></div>
<div class="a" style="left:0;top:19px;width:183px;height:1px;background:#d6d6d6"></div>
</div>
<div class="a" style="left:0;top:0;width:1280px;height:491px;overflow:hidden;pointer-events:none">
<svg style="left:834px;top:481px" width="8" height="5" viewBox="0 0 8 5"><path d="M0 0H8L4 4.5Z" fill="#404040"/></svg>
<svg style="left:850px;top:473px" width="16" height="16" viewBox="0 0 16 16"><rect x="0.75" y="0.75" width="14.5" height="14.5" fill="#fff" stroke="#1f6e9e" stroke-width="1.5"/><rect x="1.5" y="1.5" width="13" height="2.5" fill="#d6ebfa"/><path d="M1 4.75H15" stroke="#1f6e9e" stroke-width="1.5"/><path d="M6.2 13.6V6.9H8.6Q10.6 6.9 10.6 8.6Q10.6 10.3 8.6 10.3H6.2M8.4 10.3L10.9 13.6" fill="none" stroke="#505050" stroke-width="0.95"/></svg>
<div class="t" style="left:869px;top:475.0px;height:17px;width:61px;overflow:hidden;font-size:13px;color:#000">Driving</div>
<svg style="left:772.2px;top:477px" width="3" height="10" viewBox="0 0 3 10"><path d="M0.1 0H2.9L2.5 6.2H0.5Z" fill="#f00a0a"/><rect x="0.4" y="7.2" width="2.2" height="1.9" fill="#f00a0a"/></svg>
<svg style="left:936.7px;top:477px" width="3" height="10" viewBox="0 0 3 10"><path d="M0.1 0H2.9L2.5 6.2H0.5Z" fill="#f00a0a"/><rect x="0.4" y="7.2" width="2.2" height="1.9" fill="#f00a0a"/></svg>
</div>
<div class="a" style="left:765px;top:491px;width:183px;height:20px;overflow:hidden">
<div class="a" style="left:0;top:0;width:183px;height:19px;background:#fff"></div>
<div class="a" style="left:0;top:19px;width:183px;height:1px;background:#d6d6d6"></div>
</div>
<div class="a" style="left:0;top:0;width:1280px;height:511px;overflow:hidden;pointer-events:none">
<svg style="left:846px;top:501px" width="8" height="5" viewBox="0 0 8 5"><path d="M0 0H8L4 4.5Z" fill="#404040"/></svg>
<svg style="left:862px;top:493px" width="16" height="16" viewBox="0 0 16 16"><rect x="0.75" y="0.75" width="14.5" height="14.5" fill="#fff" stroke="#1f6e9e" stroke-width="1.5"/><rect x="1.5" y="1.5" width="13" height="2.5" fill="#d6ebfa"/><path d="M1 4.75H15" stroke="#1f6e9e" stroke-width="1.5"/><path d="M6.2 13.6V6.9H8.6Q10.6 6.9 10.6 8.6Q10.6 10.3 8.6 10.3H6.2M8.4 10.3L10.9 13.6" fill="none" stroke="#505050" stroke-width="0.95"/></svg>
<div class="t" style="left:881px;top:495.0px;height:17px;width:49px;overflow:hidden;font-size:13px;color:#000">Start ADAPTIVE</div>
<svg style="left:772.2px;top:497px" width="3" height="10" viewBox="0 0 3 10"><path d="M0.1 0H2.9L2.5 6.2H0.5Z" fill="#f00a0a"/><rect x="0.4" y="7.2" width="2.2" height="1.9" fill="#f00a0a"/></svg>
<svg style="left:932px;top:495px" width="15" height="12" viewBox="0 0 15 12"><path d="M1.2 5.2L5.3 9.3L13.2 1.6" fill="none" stroke="#ffffff" stroke-width="4" stroke-opacity="0.6"/><path d="M1.2 5.2L5.3 9.3L13.2 1.6" fill="none" stroke="#29a2e2" stroke-width="2.5"/></svg>
</div>
<div class="a" style="left:765px;top:511px;width:183px;height:20px;overflow:hidden">
<div class="a" style="left:0;top:0;width:183px;height:19px;background:#b5c0fc"></div>
<div class="a" style="left:0;top:19px;width:183px;height:1px;background:#d6d6d6"></div>
</div>
<div class="a" style="left:0;top:0;width:1280px;height:531px;overflow:hidden;pointer-events:none">
<svg style="left:858px;top:521px" width="8" height="5" viewBox="0 0 8 5"><path d="M0 0H8L4 4.5Z" fill="#404040"/></svg>
<svg style="left:874px;top:513px" width="16" height="16" viewBox="0 0 16 16"><rect x="0.75" y="0.75" width="14.5" height="14.5" fill="#fff" stroke="#1f6e9e" stroke-width="1.5"/><rect x="1.5" y="1.5" width="13" height="2.5" fill="#d6ebfa"/><path d="M1 4.75H15" stroke="#1f6e9e" stroke-width="1.5"/><path d="M6.2 13.6V6.9H8.6Q10.6 6.9 10.6 8.6Q10.6 10.3 8.6 10.3H6.2M8.4 10.3L10.9 13.6" fill="none" stroke="#505050" stroke-width="0.95"/></svg>
<div class="t" style="left:893px;top:515.0px;height:17px;width:37px;overflow:hidden;font-size:13px;color:#000">Start C.C.</div>
<svg style="left:767px;top:515px" width="15" height="12" viewBox="0 0 15 12"><path d="M1.2 5.2L5.3 9.3L13.2 1.6" fill="none" stroke="#ffffff" stroke-width="4" stroke-opacity="0.6"/><path d="M1.2 5.2L5.3 9.3L13.2 1.6" fill="none" stroke="#29a2e2" stroke-width="2.5"/></svg>
<svg style="left:932px;top:515px" width="15" height="12" viewBox="0 0 15 12"><path d="M1.2 5.2L5.3 9.3L13.2 1.6" fill="none" stroke="#ffffff" stroke-width="4" stroke-opacity="0.6"/><path d="M1.2 5.2L5.3 9.3L13.2 1.6" fill="none" stroke="#29a2e2" stroke-width="2.5"/></svg>
</div>
<div class="a" style="left:765px;top:531px;width:183px;height:20px;overflow:hidden">
<div class="a" style="left:0;top:0;width:183px;height:19px;background:#b5c0fc"></div>
<div class="a" style="left:0;top:19px;width:183px;height:1px;background:#d6d6d6"></div>
</div>
<div class="a" style="left:0;top:0;width:1280px;height:551px;overflow:hidden;pointer-events:none">
<svg style="left:886px;top:533px" width="16" height="16" viewBox="0 0 16 16"><path d="M2.5 0.5H9.5L13.5 4.5V15.5H2.5Z" fill="#fff" stroke="#555"/><path d="M9.5 0.5V4.5H13.5" fill="none" stroke="#555"/><path d="M4.5 7H11.5M4.5 9.5H11.5M4.5 12H11.5" stroke="#555" stroke-width="0.9"/></svg>
<div class="t" style="left:905px;top:535.0px;height:17px;width:25px;overflow:hidden;font-size:13px;color:#000">SP.A</div>
<svg style="left:936.7px;top:537px" width="3" height="10" viewBox="0 0 3 10"><path d="M0.1 0H2.9L2.5 6.2H0.5Z" fill="#f00a0a"/><rect x="0.4" y="7.2" width="2.2" height="1.9" fill="#f00a0a"/></svg>
</div>
<div class="a" style="left:765px;top:551px;width:183px;height:20px;overflow:hidden">
<div class="a" style="left:0;top:0;width:183px;height:19px;background:#b5c0fc"></div>
<div class="a" style="left:0;top:19px;width:183px;height:1px;background:#d6d6d6"></div>
</div>
<div class="a" style="left:0;top:0;width:1280px;height:571px;overflow:hidden;pointer-events:none">
<svg style="left:886px;top:553px" width="16" height="16" viewBox="0 0 16 16"><path d="M2.5 0.5H9.5L13.5 4.5V15.5H2.5Z" fill="#fff" stroke="#555"/><path d="M9.5 0.5V4.5H13.5" fill="none" stroke="#555"/><path d="M4.5 7H11.5M4.5 9.5H11.5M4.5 12H11.5" stroke="#555" stroke-width="0.9"/></svg>
<div class="t" style="left:905px;top:555.0px;height:17px;width:25px;overflow:hidden;font-size:13px;color:#000">SP.A</div>
<svg style="left:936.7px;top:557px" width="3" height="10" viewBox="0 0 3 10"><path d="M0.1 0H2.9L2.5 6.2H0.5Z" fill="#f00a0a"/><rect x="0.4" y="7.2" width="2.2" height="1.9" fill="#f00a0a"/></svg>
</div>
<div class="a" style="left:765px;top:571px;width:183px;height:15px;overflow:hidden">
<div class="a" style="left:0;top:0;width:183px;height:19px;background:#b5c0fc"></div>
<div class="a" style="left:0;top:19px;width:183px;height:1px;background:#d6d6d6"></div>
</div>
<div class="a" style="left:0;top:0;width:1280px;height:586px;overflow:hidden;pointer-events:none">
<svg style="left:886px;top:573px" width="16" height="16" viewBox="0 0 16 16"><path d="M2.5 0.5H9.5L13.5 4.5V15.5H2.5Z" fill="#fff" stroke="#555"/><path d="M9.5 0.5V4.5H13.5" fill="none" stroke="#555"/><path d="M4.5 7H11.5M4.5 9.5H11.5M4.5 12H11.5" stroke="#555" stroke-width="0.9"/></svg>
<div class="t" style="left:905px;top:575.0px;height:17px;width:25px;overflow:hidden;font-size:13px;color:#000">SP.A</div>
<svg style="left:936.7px;top:577px" width="3" height="10" viewBox="0 0 3 10"><path d="M0.1 0H2.9L2.5 6.2H0.5Z" fill="#f00a0a"/><rect x="0.4" y="7.2" width="2.2" height="1.9" fill="#f00a0a"/></svg>
</div>
<div class="a" style="left:764px;top:586px;width:200px;height:80px;border:1px solid #828282;background:#fcfcfc"></div>
<div class="a" style="left:764px;top:615px;width:200px;height:1px;background:#828282"></div>
<div class="a" style="left:767px;top:589px;width:49px;height:24px;border:1.5px solid #dde0e4;background:#fdfdfd"></div>
<svg style="left:769px;top:593px" width="20" height="16" viewBox="0 0 20 16"><g fill="#fff" stroke="#3f7cc0" stroke-width="1.3"><rect x="3.4" y="9.4" width="4.2" height="3.2"/><rect x="12.4" y="2.2" width="4.3" height="3.2"/><rect x="12.4" y="7.5" width="4.3" height="3.2"/></g><path d="M7.6 11H9.7V3.8H12.4M9.7 9.1H12.4" fill="none" stroke="#3f7cc0" stroke-width="1.3"/><path d="M14.8 10.2H19.2L17 14Z" fill="#333"/></svg>
<div class="a" style="left:791px;top:592px;width:1px;height:18px;background:#a8b8cc"></div>
<svg style="left:800px;top:597px" width="9" height="9" viewBox="0 0 9 9"><path d="M1 1L8 8M8 1L1 8" stroke="#333" stroke-width="2"/></svg>
<div class="a" style="left:864px;top:621px;width:1px;height:39px;background:#7a7a7a"></div>
<svg style="left:789.4921875px;top:628px" width="10" height="12" viewBox="0 0 10 12"><path d="M9.5 0H5.2L0 5.6L5.2 11.2H9.5L4.4 5.6Z" fill="#4a7fbf"/></svg>
<div class="t" style="left:805.4921875px;top:624.61px;font-size:17px;color:#1a1a1a;">48%</div>
<div class="a" style="left:780.0px;top:650px;width:68.0px;height:5px;background:#e4e4e4"></div>
<div class="a" style="left:780.0px;top:650px;width:32.64px;height:5px;background:#f7b52c"></div>
<div class="t" style="left:889.4921875px;top:624.61px;font-size:17px;color:#1a1a1a;">27%</div>
<svg style="left:930.0078125px;top:628px" width="10" height="12" viewBox="0 0 10 12"><path d="M0 0H4.3L9.5 5.6L4.3 11.2H0L5.1 5.6Z" fill="#4a7fbf"/></svg>
<div class="a" style="left:880.0px;top:650px;width:68.0px;height:5px;background:#e4e4e4"></div>
<div class="a" style="left:880.0px;top:650px;width:18.36px;height:5px;background:#d9443f"></div>
<svg style="left:1003px;top:227px" width="12" height="10" viewBox="0 0 12 10"><rect x="0" y="0" width="12" height="4" fill="#4c5f7d"/><rect x="0" y="5" width="12" height="2" fill="#4c5f7d"/><rect x="0" y="8" width="12" height="2" fill="#4c5f7d"/></svg>
<div class="t" style="left:1022px;top:226.00px;font-size:13px;color:#1a1a1a;">Software Design</div>
<svg style="left:1158px;top:230px" width="8" height="5" viewBox="0 0 8 5"><path d="M0 0H8L4 4.5Z" fill="#b4b4b4"/></svg>
<svg style="left:1177px;top:228px" width="10" height="10" viewBox="0 0 10 10"><path d="M0 0.5H10M0 4.5H10M0 8.5H10" stroke="#9a9a9a" stroke-width="1"/></svg>
<div class="a" style="left:995px;top:244px;width:201px;height:1px;background:#7a7a7a"></div>
<div class="a" style="left:995px;top:250px;width:200px;height:337px;border:1px solid #828282;background:#fff"></div>
<div class="a" style="left:1179px;top:251px;width:15px;height:335px;border-left:1px solid #828282;background:#e9e9e9"></div>
<div class="a" style="left:1180px;top:280px;width:14px;height:3px;background:#7d8ae8"></div>
<div class="a" style="left:1180px;top:311px;width:14px;height:3px;background:#7d8ae8"></div>
<div class="a" style="left:1180px;top:339px;width:14px;height:3px;background:#7d8ae8"></div>
<div class="a" style="left:1180px;top:403px;width:14px;height:3px;background:#7d8ae8"></div>
<div class="a" style="left:1180px;top:431px;width:14px;height:3px;background:#7d8ae8"></div>
<div class="a" style="left:1180px;top:463px;width:14px;height:3px;background:#7d8ae8"></div>
<div class="a" style="left:1180px;top:495px;width:14px;height:3px;background:#7d8ae8"></div>
<div class="a" style="left:1180px;top:523px;width:14px;height:3px;background:#7d8ae8"></div>
<div class="a" style="left:1180px;top:555px;width:14px;height:3px;background:#7d8ae8"></div>
<div class="a" style="left:996px;top:251px;width:183px;height:20px;overflow:hidden">
<div class="a" style="left:0;top:0;width:183px;height:19px;background:#fff"></div>
<div class="a" style="left:0;top:19px;width:183px;height:1px;background:#d6d6d6"></div>
</div>
<div class="a" style="left:0;top:0;width:1280px;height:271px;overflow:hidden;pointer-events:none">
<svg style="left:1017px;top:261px" width="8" height="5" viewBox="0 0 8 5"><path d="M0 0H8L4 4.5Z" fill="#404040"/></svg>
<svg style="left:1033px;top:253px" width="16" height="16" viewBox="0 0 16 16"><rect x="0.6" y="0.6" width="14.8" height="14.8" fill="#fff" stroke="#4a5e7c" stroke-width="1.1"/><path d="M5 6V9M6.5 3.5H11.5V9" fill="none" stroke="#4a5e7c" stroke-width="1"/><rect x="2.5" y="2" width="4.5" height="4" fill="#fff" stroke="#4a5e7c" stroke-width="1"/><rect x="2.5" y="2" width="4.5" height="1.5" fill="#4a5e7c"/><rect x="2.5" y="9" width="4.5" height="4" fill="#fff" stroke="#4a5e7c" stroke-width="1"/><rect x="2.5" y="9" width="4.5" height="1.5" fill="#4a5e7c"/><rect x="9.2" y="9" width="4.5" height="4" fill="#fff" stroke="#4a5e7c" stroke-width="1"/><rect x="9.2" y="9" width="4.5" height="1.5" fill="#4a5e7c"/></svg>
<div class="t" style="left:1052px;top:255.0px;height:17px;width:109px;overflow:hidden;font-size:13px;color:#000">ADAS ECU Software</div>
</div>
<div class="a" style="left:996px;top:271px;width:183px;height:20px;overflow:hidden">
<div class="a" style="left:0;top:0;width:183px;height:19px;background:#b5c0fc"></div>
<div class="a" style="left:0;top:19px;width:183px;height:1px;background:#d6d6d6"></div>
</div>
<div class="a" style="left:0;top:0;width:1280px;height:291px;overflow:hidden;pointer-events:none">
<svg style="left:1033px;top:277px" width="5" height="8" viewBox="0 0 5 8"><path d="M0 0V8L4.5 4Z" fill="#404040"/></svg>
<svg style="left:1045px;top:273px" width="17" height="16" viewBox="0 0 17 16"><path d="M5 1H16L12 4.8H1Z" fill="#fff" stroke="#6e6e6e" stroke-width="1.1"/><path d="M5 5.8H16L12 9.6H1Z" fill="#cfdceb" stroke="#6e6e6e" stroke-width="1.1"/><path d="M5 10.6H16L12 14.4H1Z" fill="#fff" stroke="#6e6e6e" stroke-width="1.1"/></svg>
<div class="t" style="left:1064px;top:275.0px;height:17px;width:97px;overflow:hidden;font-size:13px;color:#000">APP</div>
<svg style="left:1003.2px;top:277px" width="3" height="10" viewBox="0 0 3 10"><path d="M0.1 0H2.9L2.5 6.2H0.5Z" fill="#f00a0a"/><rect x="0.4" y="7.2" width="2.2" height="1.9" fill="#f00a0a"/></svg>
</div>
<div class="a" style="left:996px;top:291px;width:183px;height:20px;overflow:hidden">
<div class="a" style="left:0;top:0;width:183px;height:19px;background:#b5c0fc"></div>
<div class="a" style="left:0;top:19px;width:183px;height:1px;background:#d6d6d6"></div>
</div>
<div class="a" style="left:0;top:0;width:1280px;height:311px;overflow:hidden;pointer-events:none">
<svg style="left:1033px;top:297px" width="5" height="8" viewBox="0 0 5 8"><path d="M0 0V8L4.5 4Z" fill="#404040"/></svg>
<svg style="left:1045px;top:293px" width="17" height="16" viewBox="0 0 17 16"><path d="M5 1H16L12 4.8H1Z" fill="#fff" stroke="#6e6e6e" stroke-width="1.1"/><path d="M5 5.8H16L12 9.6H1Z" fill="#cfdceb" stroke="#6e6e6e" stroke-width="1.1"/><path d="M5 10.6H16L12 14.4H1Z" fill="#fff" stroke="#6e6e6e" stroke-width="1.1"/></svg>
<div class="t" style="left:1064px;top:295.0px;height:17px;width:97px;overflow:hidden;font-size:13px;color:#000">AFW</div>
<svg style="left:1003.2px;top:297px" width="3" height="10" viewBox="0 0 3 10"><path d="M0.1 0H2.9L2.5 6.2H0.5Z" fill="#f00a0a"/><rect x="0.4" y="7.2" width="2.2" height="1.9" fill="#f00a0a"/></svg>
</div>
<div class="a" style="left:996px;top:311px;width:183px;height:20px;overflow:hidden">
<div class="a" style="left:0;top:0;width:183px;height:19px;background:#b5c0fc"></div>
<div class="a" style="left:0;top:19px;width:183px;height:1px;background:#d6d6d6"></div>
</div>
<div class="a" style="left:0;top:0;width:1280px;height:331px;overflow:hidden;pointer-events:none">
<svg style="left:1033px;top:317px" width="5" height="8" viewBox="0 0 5 8"><path d="M0 0V8L4.5 4Z" fill="#404040"/></svg>
<svg style="left:1045px;top:313px" width="17" height="16" viewBox="0 0 17 16"><path d="M5 1H16L12 4.8H1Z" fill="#fff" stroke="#6e6e6e" stroke-width="1.1"/><path d="M5 5.8H16L12 9.6H1Z" fill="#cfdceb" stroke="#6e6e6e" stroke-width="1.1"/><path d="M5 10.6H16L12 14.4H1Z" fill="#fff" stroke="#6e6e6e" stroke-width="1.1"/></svg>
<div class="t" style="left:1064px;top:315.0px;height:17px;width:97px;overflow:hidden;font-size:13px;color:#000">PF</div>
<svg style="left:1003.2px;top:317px" width="3" height="10" viewBox="0 0 3 10"><path d="M0.1 0H2.9L2.5 6.2H0.5Z" fill="#f00a0a"/><rect x="0.4" y="7.2" width="2.2" height="1.9" fill="#f00a0a"/></svg>
</div>
<div class="a" style="left:996px;top:331px;width:183px;height:20px;overflow:hidden">
<div class="a" style="left:0;top:0;width:183px;height:19px;background:#fff"></div>
<div class="a" style="left:0;top:19px;width:183px;height:1px;background:#d6d6d6"></div>
</div>
<div class="a" style="left:0;top:0;width:1280px;height:351px;overflow:hidden;pointer-events:none">
<svg style="left:1029px;top:341px" width="8" height="5" viewBox="0 0 8 5"><path d="M0 0H8L4 4.5Z" fill="#404040"/></svg>
<svg style="left:1045px;top:333px" width="17" height="16" viewBox="0 0 17 16"><path d="M5 1H16L12 4.8H1Z" fill="#fff" stroke="#6e6e6e" stroke-width="1.1"/><path d="M5 5.8H16L12 9.6H1Z" fill="#cfdceb" stroke="#6e6e6e" stroke-width="1.1"/><path d="M5 10.6H16L12 14.4H1Z" fill="#fff" stroke="#6e6e6e" stroke-width="1.1"/></svg>
<div class="t" style="left:1064px;top:335.0px;height:17px;width:97px;overflow:hidden;font-size:13px;color:#000">HW</div>
<svg style="left:1003.2px;top:337px" width="3" height="10" viewBox="0 0 3 10"><path d="M0.1 0H2.9L2.5 6.2H0.5Z" fill="#f00a0a"/><rect x="0.4" y="7.2" width="2.2" height="1.9" fill="#f00a0a"/></svg>
</div>
<div class="a" style="left:996px;top:351px;width:183px;height:20px;overflow:hidden">
<div class="a" style="left:0;top:0;width:183px;height:19px;background:#b5c0fc"></div>
<div class="a" style="left:0;top:19px;width:183px;height:1px;background:#d6d6d6"></div>
</div>
<div class="a" style="left:0;top:0;width:1280px;height:371px;overflow:hidden;pointer-events:none">
<svg style="left:1045px;top:357px" width="5" height="8" viewBox="0 0 5 8"><path d="M0 0V8L4.5 4Z" fill="#404040"/></svg>
<svg style="left:1057px;top:353px" width="16" height="16" viewBox="0 0 16 16"><rect x="3.5" y="0.5" width="10" height="14" fill="#fff" stroke="#555" stroke-width="1.2"/><rect x="0.5" y="3.5" width="5" height="3" fill="#fff" stroke="#555" stroke-width="1.2"/><rect x="0.5" y="8.5" width="5" height="3" fill="#fff" stroke="#555" stroke-width="1.2"/></svg>
<div class="t" style="left:1076px;top:355.0px;height:17px;width:85px;overflow:hidden;font-size:13px;color:#000">CAN controller</div>
<svg style="left:998px;top:355px" width="15" height="12" viewBox="0 0 15 12"><path d="M1.2 5.2L5.3 9.3L13.2 1.6" fill="none" stroke="#ffffff" stroke-width="4" stroke-opacity="0.6"/><path d="M1.2 5.2L5.3 9.3L13.2 1.6" fill="none" stroke="#29a2e2" stroke-width="2.5"/></svg>
</div>
<div class="a" style="left:996px;top:371px;width:183px;height:20px;overflow:hidden">
<div class="a" style="left:0;top:0;width:183px;height:19px;background:#b5c0fc"></div>
<div class="a" style="left:0;top:19px;width:183px;height:1px;background:#d6d6d6"></div>
</div>
<div class="a" style="left:0;top:0;width:1280px;height:391px;overflow:hidden;pointer-events:none">
<svg style="left:1057px;top:373px" width="16" height="16" viewBox="0 0 16 16"><rect x="3.5" y="0.5" width="10" height="14" fill="#fff" stroke="#555" stroke-width="1.2"/><rect x="0.5" y="3.5" width="5" height="3" fill="#fff" stroke="#555" stroke-width="1.2"/><rect x="0.5" y="8.5" width="5" height="3" fill="#fff" stroke="#555" stroke-width="1.2"/></svg>
<div class="t" style="left:1076px;top:375.0px;height:17px;width:85px;overflow:hidden;font-size:13px;color:#000">Switch</div>
<svg style="left:998px;top:375px" width="15" height="12" viewBox="0 0 15 12"><path d="M1.2 5.2L5.3 9.3L13.2 1.6" fill="none" stroke="#ffffff" stroke-width="4" stroke-opacity="0.6"/><path d="M1.2 5.2L5.3 9.3L13.2 1.6" fill="none" stroke="#29a2e2" stroke-width="2.5"/></svg>
</div>
<div class="a" style="left:996px;top:391px;width:183px;height:20px;overflow:hidden">
<div class="a" style="left:0;top:0;width:183px;height:19px;background:#b5c0fc"></div>
<div class="a" style="left:0;top:19px;width:183px;height:1px;background:#d6d6d6"></div>
</div>
<div class="a" style="left:0;top:0;width:1280px;height:411px;overflow:hidden;pointer-events:none">
<svg style="left:1041px;top:401px" width="8" height="5" viewBox="0 0 8 5"><path d="M0 0H8L4 4.5Z" fill="#404040"/></svg>
<svg style="left:1057px;top:393px" width="16" height="16" viewBox="0 0 16 16"><rect x="3.5" y="0.5" width="10" height="14" fill="#fff" stroke="#555" stroke-width="1.2"/><rect x="0.5" y="3.5" width="5" height="3" fill="#fff" stroke="#555" stroke-width="1.2"/><rect x="0.5" y="8.5" width="5" height="3" fill="#fff" stroke="#555" stroke-width="1.2"/></svg>
<div class="t" style="left:1076px;top:395.0px;height:17px;width:85px;overflow:hidden;font-size:13px;color:#000">CAN controller</div>
<svg style="left:998px;top:395px" width="15" height="12" viewBox="0 0 15 12"><path d="M1.2 5.2L5.3 9.3L13.2 1.6" fill="none" stroke="#ffffff" stroke-width="4" stroke-opacity="0.6"/><path d="M1.2 5.2L5.3 9.3L13.2 1.6" fill="none" stroke="#29a2e2" stroke-width="2.5"/></svg>
</div>
<div class="a" style="left:996px;top:411px;width:183px;height:20px;overflow:hidden">
<div class="a" style="left:0;top:0;width:183px;height:19px;background:#b5c0fc"></div>
<div class="a" style="left:0;top:19px;width:183px;height:1px;background:#d6d6d6"></div>
</div>
<div class="a" style="left:0;top:0;width:1280px;height:431px;overflow:hidden;pointer-events:none">
<svg style="left:1069px;top:413px" width="17" height="16" viewBox="0 0 17 16"><rect x="0.5" y="3.5" width="16" height="10" fill="#fff" stroke="#555"/><path d="M3.5 3.5V13.5M13.5 3.5V13.5" stroke="#555"/></svg>
<div class="t" style="left:1088px;top:415.0px;height:17px;width:73px;overflow:hidden;font-size:13px;color:#000">External transceiver</div>
<svg style="left:1003.2px;top:417px" width="3" height="10" viewBox="0 0 3 10"><path d="M0.1 0H2.9L2.5 6.2H0.5Z" fill="#f00a0a"/><rect x="0.4" y="7.2" width="2.2" height="1.9" fill="#f00a0a"/></svg>
</div>
<div class="a" style="left:996px;top:431px;width:183px;height:20px;overflow:hidden">
<div class="a" style="left:0;top:0;width:183px;height:19px;background:#b5c0fc"></div>
<div class="a" style="left:0;top:19px;width:183px;height:1px;background:#d6d6d6"></div>
</div>
<div class="a" style="left:0;top:0;width:1280px;height:451px;overflow:hidden;pointer-events:none">
<svg style="left:1069px;top:433px" width="17" height="16" viewBox="0 0 17 16"><rect x="0.5" y="3.5" width="16" height="10" fill="#fff" stroke="#555"/><path d="M3.5 3.5V13.5M13.5 3.5V13.5" stroke="#555"/></svg>
<div class="t" style="left:1088px;top:435.0px;height:17px;width:73px;overflow:hidden;font-size:13px;color:#000">Communication</div>
<svg style="left:1003.2px;top:437px" width="3" height="10" viewBox="0 0 3 10"><path d="M0.1 0H2.9L2.5 6.2H0.5Z" fill="#f00a0a"/><rect x="0.4" y="7.2" width="2.2" height="1.9" fill="#f00a0a"/></svg>
</div>
<div class="a" style="left:996px;top:451px;width:183px;height:20px;overflow:hidden">
<div class="a" style="left:0;top:0;width:183px;height:19px;background:#b5c0fc"></div>
<div class="a" style="left:0;top:19px;width:183px;height:1px;background:#d6d6d6"></div>
</div>
<div class="a" style="left:0;top:0;width:1280px;height:471px;overflow:hidden;pointer-events:none">
<svg style="left:1057px;top:453px" width="16" height="16" viewBox="0 0 16 16"><rect x="3.5" y="0.5" width="10" height="14" fill="#fff" stroke="#555" stroke-width="1.2"/><rect x="0.5" y="3.5" width="5" height="3" fill="#fff" stroke="#555" stroke-width="1.2"/><rect x="0.5" y="8.5" width="5" height="3" fill="#fff" stroke="#555" stroke-width="1.2"/></svg>
<div class="t" style="left:1076px;top:455.0px;height:17px;width:85px;overflow:hidden;font-size:13px;color:#000">I/G</div>
<svg style="left:998px;top:455px" width="15" height="12" viewBox="0 0 15 12"><path d="M1.2 5.2L5.3 9.3L13.2 1.6" fill="none" stroke="#ffffff" stroke-width="4" stroke-opacity="0.6"/><path d="M1.2 5.2L5.3 9.3L13.2 1.6" fill="none" stroke="#29a2e2" stroke-width="2.5"/></svg>
</div>
<div class="a" style="left:995px;top:586px;width:200px;height:80px;border:1px solid #828282;background:#fcfcfc"></div>
<div class="a" style="left:995px;top:615px;width:200px;height:1px;background:#828282"></div>
<div class="a" style="left:998px;top:589px;width:49px;height:24px;border:1.5px solid #dde0e4;background:#fdfdfd"></div>
<svg style="left:1000px;top:593px" width="20" height="16" viewBox="0 0 20 16"><g fill="#fff" stroke="#3f7cc0" stroke-width="1.3"><rect x="3.4" y="9.4" width="4.2" height="3.2"/><rect x="12.4" y="2.2" width="4.3" height="3.2"/><rect x="12.4" y="7.5" width="4.3" height="3.2"/></g><path d="M7.6 11H9.7V3.8H12.4M9.7 9.1H12.4" fill="none" stroke="#3f7cc0" stroke-width="1.3"/><path d="M14.8 10.2H19.2L17 14Z" fill="#333"/></svg>
<div class="a" style="left:1022px;top:592px;width:1px;height:18px;background:#a8b8cc"></div>
<svg style="left:1031px;top:597px" width="9" height="9" viewBox="0 0 9 9"><path d="M1 1L8 8M8 1L1 8" stroke="#333" stroke-width="2"/></svg>
<div class="a" style="left:1095px;top:621px;width:1px;height:39px;background:#7a7a7a"></div>
<svg style="left:1020.4921875px;top:628px" width="10" height="12" viewBox="0 0 10 12"><path d="M9.5 0H5.2L0 5.6L5.2 11.2H9.5L4.4 5.6Z" fill="#4a7fbf"/></svg>
<div class="t" style="left:1036.4921875px;top:624.61px;font-size:17px;color:#1a1a1a;">21%</div>
<div class="a" style="left:1011.0px;top:650px;width:68.0px;height:5px;background:#e4e4e4"></div>
<div class="a" style="left:1011.0px;top:650px;width:14.28px;height:5px;background:#d9443f"></div>
<div class="t" style="left:1117.1796875px;top:624.61px;font-size:17px;color:#1a1a1a;">None</div>
<svg style="left:1164.3203125px;top:628px" width="10" height="12" viewBox="0 0 10 12"><path d="M0 0H4.3L9.5 5.6L4.3 11.2H0L5.1 5.6Z" fill="#4a7fbf"/></svg>
<svg style="left:0;top:0" width="1280" height="720" viewBox="0 0 1280 720"><line x1="271" y1="280" x2="302" y2="280" stroke="#cdcdcd" stroke-width="1.5" stroke-dasharray="3.5 4"/><line x1="271" y1="280" x2="302" y2="300" stroke="#cdcdcd" stroke-width="1.5" stroke-dasharray="3.5 4"/><line x1="271" y1="320" x2="302" y2="280" stroke="#cdcdcd" stroke-width="1.5" stroke-dasharray="3.5 4"/><line x1="271" y1="340" x2="302" y2="300" stroke="#cdcdcd" stroke-width="1.5" stroke-dasharray="3.5 4"/><line x1="271" y1="360" x2="302" y2="300" stroke="#1a72b4" stroke-width="2.2"/><line x1="502" y1="280" x2="533" y2="260" stroke="#cdcdcd" stroke-width="1.5" stroke-dasharray="3.5 4"/><line x1="502" y1="280" x2="533" y2="280" stroke="#cdcdcd" stroke-width="1.5" stroke-dasharray="3.5 4"/><line x1="502" y1="280" x2="533" y2="300" stroke="#cdcdcd" stroke-width="1.5" stroke-dasharray="3.5 4"/><line x1="502" y1="300" x2="533" y2="360" stroke="#1a72b4" stroke-width="2.2"/><line x1="502" y1="400" x2="533" y2="300" stroke="#1a72b4" stroke-width="2.2"/><line x1="502" y1="420" x2="533" y2="320" stroke="#1a72b4" stroke-width="2.2"/><line x1="502" y1="420" x2="533" y2="340" stroke="#1a72b4" stroke-width="2.2"/><line x1="733" y1="260" x2="764" y2="260" stroke="#cdcdcd" stroke-width="1.5" stroke-dasharray="3.5 4"/><line x1="733" y1="262" x2="764" y2="300" stroke="#cdcdcd" stroke-width="1.5" stroke-dasharray="3.5 4"/><line x1="733" y1="280" x2="764" y2="300" stroke="#cdcdcd" stroke-width="1.5" stroke-dasharray="3.5 4"/><line x1="733" y1="282" x2="764" y2="342" stroke="#cdcdcd" stroke-width="1.5" stroke-dasharray="3.5 4"/><line x1="733" y1="284" x2="764" y2="478" stroke="#c8c8c8" stroke-width="2" stroke-dasharray="3 2.5"/><line x1="733" y1="284" x2="764" y2="492" stroke="#c8c8c8" stroke-width="2" stroke-dasharray="3 2.5"/><line x1="734" y1="284" x2="764" y2="505" stroke="#cccccc" stroke-width="2" stroke-dasharray="3 2.5"/><line x1="733" y1="360" x2="764" y2="380" stroke="#1a72b4" stroke-width="2.2"/><line x1="733" y1="360" x2="764" y2="420" stroke="#1a72b4" stroke-width="2.2"/><line x1="733" y1="360" x2="764" y2="520" stroke="#1a72b4" stroke-width="2.2"/><line x1="733" y1="360" x2="754" y2="591" stroke="#1a72b4" stroke-width="2.2"/><line x1="964" y1="280" x2="995" y2="280" stroke="#cdcdcd" stroke-width="1.5" stroke-dasharray="3.5 4"/><line x1="964" y1="282" x2="995" y2="300" stroke="#c8c8c8" stroke-width="2.2" stroke-dasharray="3 2.5"/><line x1="964" y1="286" x2="995" y2="330" stroke="#c8c8c8" stroke-width="2.2" stroke-dasharray="3 2.5"/><line x1="964" y1="292" x2="995" y2="350" stroke="#c8c8c8" stroke-width="2.2" stroke-dasharray="3 2.5"/><line x1="964" y1="300" x2="995" y2="380" stroke="#c8c8c8" stroke-width="2.2" stroke-dasharray="3 2.5"/><line x1="964" y1="312" x2="995" y2="400" stroke="#c8c8c8" stroke-width="2.2" stroke-dasharray="3 2.5"/><line x1="964" y1="322" x2="995" y2="430" stroke="#c8c8c8" stroke-width="2.2" stroke-dasharray="3 2.5"/><line x1="995" y1="300" x2="964" y2="470" stroke="#c8c8c8" stroke-width="2.4" stroke-dasharray="3 2.5"/><line x1="995" y1="320" x2="964" y2="500" stroke="#c8c8c8" stroke-width="2.4" stroke-dasharray="3 2.5"/><line x1="995" y1="340" x2="964" y2="540" stroke="#c8c8c8" stroke-width="2.4" stroke-dasharray="3 2.5"/><line x1="995" y1="360" x2="964" y2="560" stroke="#c8c8c8" stroke-width="2.4" stroke-dasharray="3 2.5"/><line x1="995" y1="280" x2="964" y2="420" stroke="#1a72b4" stroke-width="1.8" stroke-dasharray="2.5 3"/><line x1="995" y1="300" x2="964" y2="520" stroke="#1a72b4" stroke-width="1.8" stroke-dasharray="2.5 3"/><line x1="995" y1="290" x2="964" y2="380" stroke="#1a72b4" stroke-width="1.8" stroke-dasharray="2.5 3"/><line x1="995" y1="280" x2="974" y2="591" stroke="#1a72b4" stroke-width="2.6" stroke-dasharray="3 2.5"/><line x1="995" y1="300" x2="974" y2="591" stroke="#1a72b4" stroke-width="2.6" stroke-dasharray="3 2.5"/><line x1="995" y1="320" x2="974" y2="591" stroke="#1a72b4" stroke-width="2.6" stroke-dasharray="3 2.5"/><line x1="995" y1="360" x2="974" y2="591" stroke="#1a72b4" stroke-width="2.2"/><line x1="995" y1="380" x2="974" y2="591" stroke="#1a72b4" stroke-width="2.2"/><line x1="995" y1="400" x2="974" y2="591" stroke="#1a72b4" stroke-width="2.2"/><line x1="995" y1="460" x2="974" y2="591" stroke="#1a72b4" stroke-width="2.2"/><rect x="749.5" y="586.5" width="10" height="10" fill="#f4c4d4" stroke="#a8283c" stroke-width="1.8"/><rect x="969.5" y="586.5" width="10" height="10" fill="#f4c4d4" stroke="#a8283c" stroke-width="1.8"/></svg>
<svg style="left:838px;top:701px" width="16" height="13" viewBox="0 0 16 13"><rect x="0.5" y="0.5" width="15" height="12" fill="#fff" stroke="#7a7a7a"/><rect x="0.5" y="0.5" width="15" height="2" fill="#7a7a7a"/><rect x="1" y="3" width="4" height="9" fill="#c6e0f8"/><path d="M5.5 3V12.5" stroke="#7a7a7a"/></svg>
<svg style="left:866px;top:701px" width="16" height="13" viewBox="0 0 16 13"><rect x="0.5" y="0.5" width="15" height="12" fill="#fff" stroke="#7a7a7a"/><rect x="0.5" y="0.5" width="15" height="2" fill="#7a7a7a"/><rect x="1" y="9" width="14" height="3" fill="#c6e0f8"/><path d="M0.5 8.5H15.5" stroke="#7a7a7a"/></svg>
<svg style="left:894px;top:701px" width="16" height="13" viewBox="0 0 16 13"><rect x="0.5" y="0.5" width="15" height="12" fill="#f2f2f2" stroke="#c0c0c0"/><rect x="0.5" y="0.5" width="15" height="2" fill="#c8c8c8"/><path d="M8 3V12.5" stroke="#c0c0c0"/></svg>
<svg style="left:921px;top:700px" width="17" height="15" viewBox="0 0 17 15"><path d="M1 4L7 1L12 3.5L6 6.5Z" fill="#fff" stroke="#8a8a8a"/><path d="M1 4V7L6 9.5V6.5Z" fill="#9a9a9a"/><path d="M3 8L8 5.5L12 8L7 10.5Z" fill="#fff" stroke="#8a8a8a"/><path d="M3 8V11L7 13V10.5Z" fill="#aaa"/><path d="M6 14.5L7 12L14 5.5L16 7.5L9 14Z" fill="#8a8a8a"/></svg>
<svg style="left:950px;top:700px" width="17" height="15" viewBox="0 0 17 15"><rect x="0.5" y="0.5" width="15" height="12.5" fill="#fff" stroke="#555"/><rect x="0.5" y="0.5" width="15" height="2" fill="#555"/><circle cx="11.5" cy="10.5" r="3.3" fill="#fff" stroke="#222" stroke-width="1.8" stroke-dasharray="1.4 0.9"/><circle cx="11.5" cy="10.5" r="1.1" fill="#222"/></svg>
<div class="a" style="left:1033px;top:706px;width:10px;height:1px;background:#a8a8a8"></div>
<div class="a" style="left:1055px;top:706px;width:100px;height:1.5px;background:#8a8a8a"></div>
<div class="a" style="left:1058px;top:701px;width:5px;height:11px;background:#9a9a9a"></div>
<svg style="left:1168px;top:702px" width="10" height="10" viewBox="0 0 10 10"><path d="M5 0V10M0 5H10" stroke="#a0a0a0" stroke-width="1"/></svg>
<svg style="left:1198px;top:700px" width="15" height="15" viewBox="0 0 15 15"><path d="M7.5 0L10 3H5Z M7.5 15L10 12H5Z M0 7.5L3 5V10Z M15 7.5L12 5V10Z" fill="#cfcfcf"/><path d="M7.5 2V13M2 7.5H13" stroke="#cfcfcf" stroke-width="1.5"/></svg>
<svg style="left:1237px;top:700px" width="15" height="15" viewBox="0 0 15 15"><path d="M7.5 0.5C4 0.5 3 3.5 3 6V9.5L0.5 12H14.5L12 9.5V6C12 3.5 11 0.5 7.5 0.5Z" fill="#333"/><path d="M5.5 12.5Q7.5 15.5 9.5 12.5Z" fill="#333"/><path d="M0.5 12H14.5" stroke="#fff" stroke-width="0.8"/></svg>
<svg style="left:1265px;top:705px" width="11" height="11" viewBox="0 0 11 11"><g fill="#9a9a9a"><rect x="8" y="0" width="2" height="2"/><rect x="4" y="4" width="2" height="2"/><rect x="8" y="4" width="2" height="2"/><rect x="0" y="8" width="2" height="2"/><rect x="4" y="8" width="2" height="2"/><rect x="8" y="8" width="2" height="2"/></g></svg>
<div class="a" style="left:1px;top:410px;width:9px;height:30px;border:1px solid #c4c4c4;border-left:none;background:#f2f3f5"></div>
<svg style="left:4px;top:421px" width="4" height="8" viewBox="0 0 4 8"><path d="M0 0V8L3.5 4Z" fill="#a0a0a0"/></svg></body></html>
